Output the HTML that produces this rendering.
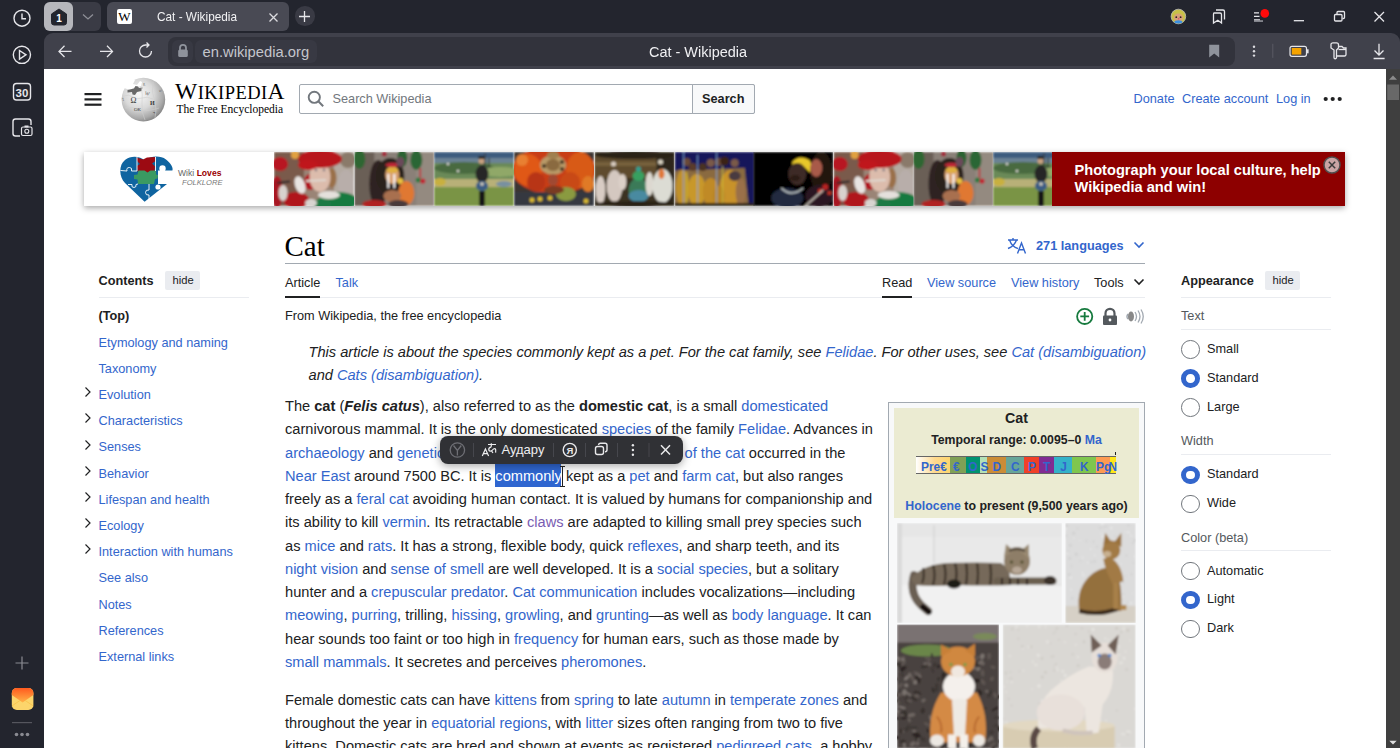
<!DOCTYPE html>
<html><head><meta charset="utf-8">
<style>
*{margin:0;padding:0;box-sizing:border-box}
html,body{width:1400px;height:748px;overflow:hidden;background:#23252e;font-family:"Liberation Sans",sans-serif;color:#202122}
.a{position:absolute}
#side{left:0;top:0;width:44px;height:748px;background:#23252e}
#tabbar{left:44px;top:0;width:1356px;height:33px;background:#23252e}
#toolbar{left:44px;top:33px;width:1356px;height:36px;background:#40414b;border-top-left-radius:9px}
#page{left:44px;top:69px;width:1342px;height:679px;background:#fff}
#sb{left:1386px;top:69px;width:14px;height:679px;background:#3f3f3f}
a,.l{color:#3366cc;text-decoration:none}
.v{color:#795cb2}
.ln{position:absolute;white-space:nowrap;font-size:14.62px;line-height:23.27px;left:285px}
.t13{font-size:12.73px}
.toc{position:absolute;left:98.5px;font-size:12.73px;white-space:nowrap;line-height:16px}
.chev{position:absolute;left:84px;width:8px;height:8px}
.rad{position:absolute;left:1181px;width:18.5px;height:18.5px;border-radius:50%;border:1.3px solid #72777d;background:#fff}
.rad.on{border:5.5px solid #3366cc}
.rl{position:absolute;left:1207px;font-size:12.73px;white-space:nowrap;line-height:16px}
.ph{position:absolute;top:152px;height:54px;width:80px;overflow:hidden}
</style></head><body>
<div id="side" class="a"></div>
<div id="tabbar" class="a"></div>
<div id="toolbar" class="a"></div>
<div id="page" class="a"></div>
<div id="sb" class="a"></div>

<!-- ===== sidebar icons ===== -->
<svg class="a" style="left:0;top:0" width="44" height="748" viewBox="0 0 44 748">
<g stroke="#e6e6ea" stroke-width="1.4" fill="none">
<circle cx="22" cy="18.2" r="8"/><path d="M22 13.5 V18.8 H26"/>
<circle cx="21.9" cy="54.8" r="8.6"/><path d="M19.5 50.5 L26 54.8 L19.5 59.1 Z"/>
<rect x="13.5" y="83.5" width="17" height="16.5" rx="3"/>
<path d="M20 136 H15.5 A2.5 2.5 0 0 1 13 133.5 V121.5 A2.5 2.5 0 0 1 15.5 119 H28.5 A2.5 2.5 0 0 1 31 121.5 V125"/>
</g>
<text x="22" y="96.5" text-anchor="middle" font-family="Liberation Sans" font-size="11.5" font-weight="bold" fill="#e6e6ea">30</text>
<rect x="21.5" y="127" width="10.5" height="8.5" rx="1.5" fill="none" stroke="#e6e6ea" stroke-width="1.2"/><rect x="24.5" y="125.5" width="4" height="2" fill="#e6e6ea"/><circle cx="26.8" cy="131.3" r="2" fill="none" stroke="#e6e6ea" stroke-width="1.1"/>
<path d="M22 656.5 V669.5 M15.5 663 H28.5" stroke="#8a8b92" stroke-width="1.2"/>
<defs><linearGradient id="mailg" x1="0" y1="0" x2="0" y2="1"><stop offset="0" stop-color="#ff5a1f"/><stop offset="1" stop-color="#ffb347"/></linearGradient></defs>
<rect x="11.8" y="688" width="21.6" height="22" rx="5" fill="#fcd56b"/>
<path d="M11.8 693 A5 5 0 0 1 16.8 688 H28.4 A5 5 0 0 1 33.4 693 V695 L22.6 702.5 L11.8 695 Z" fill="url(#mailg)"/>
<path d="M11.8 706 L20 700.5 M33.4 706 L25.2 700.5" stroke="#f7c24a" stroke-width="0.8"/>
<rect x="12" y="722" width="20" height="1.2" fill="#55565e"/>
<circle cx="16.5" cy="734.5" r="1.8" fill="#8a8b92"/><circle cx="22" cy="734.5" r="1.8" fill="#8a8b92"/><circle cx="27.5" cy="734.5" r="1.8" fill="#8a8b92"/>
</svg>

<!-- ===== tab strip ===== -->
<div class="a" style="left:44px;top:2px;width:57px;height:28.5px;background:#3a3b45;border-radius:6px"></div>
<div class="a" style="left:44px;top:2px;width:29px;height:28.5px;background:#b6b7bc;border-radius:6px"></div>
<svg class="a" style="left:50px;top:8px" width="18" height="18" viewBox="0 0 18 18"><path d="M1.5 6 L9 1 L16.5 6 V14.5 A2.5 2.5 0 0 1 14 17 H4 A2.5 2.5 0 0 1 1.5 14.5 Z" fill="#23252e" stroke="#23252e" stroke-width="1" stroke-linejoin="round"/><text x="9" y="14" text-anchor="middle" font-family="Liberation Sans" font-size="10" font-weight="bold" fill="#fff">1</text></svg>
<svg class="a" style="left:81px;top:13px" width="14" height="8" viewBox="0 0 14 8"><path d="M2 1.5 L7 6 L12 1.5" stroke="#8e8f97" stroke-width="1.3" fill="none"/></svg>
<div class="a" style="left:107px;top:2px;width:182px;height:28.5px;background:#494a54;border-radius:6px"></div>
<div class="a" style="left:117px;top:9px;width:15px;height:15px;background:#fff;border-radius:2px"></div>
<div class="a" style="left:117px;top:8.5px;width:15px;text-align:center;font-family:'Liberation Serif',serif;font-size:13px;line-height:16px;color:#000">W</div>
<div class="a" style="left:157px;top:8.5px;font-size:13.2px;line-height:16px;color:#f2f2f4;white-space:nowrap;transform:scaleX(0.895);transform-origin:0 0">Cat - Wikipedia</div>
<svg class="a" style="left:268px;top:12px" width="11" height="11" viewBox="0 0 11 11"><path d="M1.5 1.5 L9.5 9.5 M9.5 1.5 L1.5 9.5" stroke="#dcdce0" stroke-width="1.3"/></svg>
<div class="a" style="left:295px;top:6.3px;width:19.5px;height:19.5px;background:#393a44;border-radius:50%"></div>
<svg class="a" style="left:298px;top:9.5px" width="13" height="13" viewBox="0 0 13 13"><path d="M6.5 1 V12 M1 6.5 H12" stroke="#e6e6ea" stroke-width="1.3"/></svg>

<svg class="a" style="left:1160px;top:0" width="240" height="33" viewBox="1160 0 240 33">
<circle cx="1178.4" cy="16.5" r="7.3" fill="#c8c048" stroke="#bdbdbd" stroke-width="0.8"/><ellipse cx="1178.4" cy="17.8" rx="4.6" ry="4.2" fill="#d8a078"/><circle cx="1176.3" cy="17.2" r="0.9" fill="#2a2020"/><circle cx="1180.6" cy="17.2" r="0.9" fill="#2a2020"/><circle cx="1178.6" cy="18.8" r="0.8" fill="#e04878"/><ellipse cx="1178.4" cy="21.8" rx="4" ry="1.6" fill="#3a90e0"/>
<g stroke="#e6e6ea" stroke-width="1.3" fill="none">
<path d="M1214 13 H1220 A1.5 1.5 0 0 1 1221.5 14.5 V23 L1217.8 20.3 L1213.5 23 V14.5 Q1213.5 13 1214 13Z"/><path d="M1216 10 H1223 A1.5 1.5 0 0 1 1224.5 11.5 V19.5"/>
<path d="M1254 12.8 H1259 M1254 16.3 H1259.5 M1254 19.8 H1260"/>
<path d="M1293.8 20.7 H1304"/>
<rect x="1334.5" y="14.5" width="7.5" height="6.5" rx="1"/><path d="M1337 14 V12.5 A1 1 0 0 1 1338 11.5 H1343.5 A1 1 0 0 1 1344.5 12.5 V17.5 A1 1 0 0 1 1343.5 18.5 H1342.5"/>
<path d="M1374.5 12 L1384 21.5 M1384 12 L1374.5 21.5"/>
</g>
<rect x="1254" y="20.3" width="9" height="1.5" fill="#9a9ba2"/>
<circle cx="1264.8" cy="13.4" r="4.3" fill="#ff0a0a"/>
</svg>

<!-- ===== toolbar ===== -->
<div class="a" style="left:1390px;top:33px;width:10px;height:10px;background:#23252e"></div>
<div class="a" style="left:1380px;top:33px;width:20px;height:36px;background:#40414b;border-top-right-radius:9px"></div>
<svg class="a" style="left:44px;top:33px" width="140" height="36" viewBox="44 33 140 36">
<g stroke="#e6e6ea" stroke-width="1.3" fill="none">
<path d="M59 51.4 H71.5 M64.5 45.8 L59 51.4 L64.5 57"/>
<path d="M100 51.4 H112.5 M107 45.8 L112.5 51.4 L107 57"/>
<path d="M151.5 51 A6 6 0 1 1 145.5 45 H148.5 M146.5 42.5 L149 45 L146.5 47.5"/>
</g>
</svg>
<div class="a" style="left:168px;top:36.6px;width:1067px;height:29px;background:#32333c;border-radius:8px"></div>
<div class="a" style="left:172px;top:39.5px;width:21px;height:23px;background:#383943;border-radius:6px"></div>
<svg class="a" style="left:176px;top:43px" width="14" height="15" viewBox="0 0 14 15"><path d="M4 7 V4.8 A3 3 0 0 1 10 4.8 V7" stroke="#8f939c" stroke-width="1.8" fill="none"/><rect x="2.2" y="6.5" width="9.6" height="7.5" rx="1.6" fill="#8f939c"/></svg>
<div class="a" style="left:195px;top:39.5px;width:122px;height:23px;background:#383943;border-radius:6px"></div>
<div class="a" style="left:202.5px;top:43.8px;font-size:14.75px;line-height:17px;color:#c4c5cc;white-space:nowrap">en.wikipedia.org</div>
<div class="a" style="left:648.5px;top:43px;font-size:15.3px;line-height:17px;color:#f0f0f3;white-space:nowrap;transform:scaleX(0.945);transform-origin:0 0">Cat - Wikipedia</div>
<svg class="a" style="left:1200px;top:33px" width="200" height="36" viewBox="1200 33 200 36">
<path d="M1209.2 44.8 H1219.2 V57.5 L1214.2 53.5 L1209.2 57.5 Z" fill="#8f939c"/>
<circle cx="1254" cy="46.8" r="1.2" fill="#dcdce0"/><circle cx="1254" cy="51.2" r="1.2" fill="#dcdce0"/><circle cx="1254" cy="55.6" r="1.2" fill="#dcdce0"/>
<rect x="1272.3" y="43.8" width="1" height="14" fill="#5a5b64"/>
<rect x="1290" y="46.3" width="16.5" height="10" rx="2" fill="none" stroke="#e6e6ea" stroke-width="1.2"/><rect x="1291.8" y="48" width="9.5" height="6.6" fill="#f5a300"/><rect x="1306.8" y="49.3" width="1.8" height="4" fill="#e6e6ea"/>
<g stroke="#e6e6ea" stroke-width="1.3" fill="none">
<path d="M1331 44 A2 2 0 0 1 1333 42.8 H1336.5 A2 2 0 0 1 1338.5 44.8 V48 L1336.5 50 V57.5 A1.2 1.2 0 0 1 1334 57.5 V50 L1331 48 Z"/><path d="M1338.5 46.5 H1342 L1343.5 48 H1346 V54.5 A1.5 1.5 0 0 1 1344.5 56 H1336.5"/><path d="M1338.5 49.5 H1346"/>
<path d="M1379 43.8 V55 M1374.5 50.5 L1379 55 L1383.5 50.5 M1373.6 58.5 H1384.6"/>
</g>
</svg>
<!-- scrollbar -->
<svg class="a" style="left:1386px;top:69px" width="14" height="679" viewBox="0 0 14 679"><path d="M3 10.8 L7 6.6 L11 10.8 Z" fill="#8c8c8c"/><rect x="1.2" y="15.5" width="11.8" height="15.5" fill="#686868"/><path d="M3.3 671.8 L7 675.6 L10.7 671.8 Z" fill="#e0e0e0"/></svg>


<!-- ===== Wikipedia header ===== -->
<svg class="a" style="left:84px;top:92px" width="18" height="15" viewBox="0 0 18 15"><rect x="0.5" y="1" width="17" height="2.2" fill="#202122"/><rect x="0.5" y="6.3" width="17" height="2.2" fill="#202122"/><rect x="0.5" y="11.6" width="17" height="2.2" fill="#202122"/></svg>

<svg class="a" style="left:115px;top:74px" width="60" height="50" viewBox="0 0 60 50">
<defs><radialGradient id="gl" cx="0.4" cy="0.38" r="0.68"><stop offset="0" stop-color="#f8f8f8"/><stop offset="0.5" stop-color="#d8d8d8"/><stop offset="0.82" stop-color="#a8a8a8"/><stop offset="1" stop-color="#7a7a7a"/></radialGradient></defs>
<circle cx="28.4" cy="25.6" r="21.8" fill="url(#gl)"/>
<path d="M9 14 Q12 8 17 5 L20 6 L18 10 L22 11 L25 7 L27 8 L26 12 L20 13 L15 16 Z" fill="#fff"/>
<path d="M12.5 16 L19 14.5 L20.5 12 L23 12.5 L24 14 L27.5 13.5 L26.5 17 L22 18 L20 21 L17.5 20.5 L17 18 L12.5 18.5 Z" fill="#686868"/>
<g stroke="#cfcfcf" stroke-width="0.6" fill="none"><path d="M8 22 Q14 20 18 23 Q22 26 27 24 Q32 22 38 25 M26 12 Q28 20 27 30 Q26 38 30 46 M38 8 Q36 18 40 28 Q42 36 40 44 M10 34 Q18 32 24 36 Q32 38 44 34"/></g>
<text x="15.5" y="28.8" font-family="Liberation Serif" font-size="8" fill="#3a3a3a">Ω</text>
<text x="30" y="21" font-family="Liberation Serif" font-size="5" fill="#555" transform="rotate(15 32 19)">W</text>
<text x="35" y="31" font-family="Liberation Serif" font-size="6" font-weight="bold" fill="#333">И</text>
<text x="19" y="37" font-family="Liberation Serif" font-size="5" fill="#444">ОК</text>
<text x="38" y="40" font-family="Liberation Serif" font-size="4.5" font-weight="bold" fill="#444">ר</text>
<text x="7" y="27" font-family="Liberation Serif" font-size="4" fill="#666">ไ</text>
<text x="44" y="18" font-family="Liberation Serif" font-size="4" fill="#666">ש</text>
<text x="28" y="11" font-family="Liberation Serif" font-size="3.5" fill="#666">ع</text>
</svg>
<div class="a" style="left:175px;top:80px;font-family:'Liberation Serif',serif;font-size:23.5px;line-height:23px;letter-spacing:0.45px;color:#000;white-space:nowrap">W<span style="font-size:18.5px">IKIPEDI</span>A</div>
<div class="a" style="left:176.5px;top:101.5px;font-family:'Liberation Serif',serif;font-size:11.5px;line-height:14px;color:#000;white-space:nowrap">The Free Encyclopedia</div>

<div class="a" style="left:299px;top:84px;width:456px;height:29.5px;border:1px solid #a2a9b1;border-radius:2px;background:#fff"></div>
<div class="a" style="left:691.5px;top:84px;width:63.5px;height:29.5px;border:1px solid #a2a9b1;border-radius:0 2px 2px 0;background:#f8f9fa"></div>
<svg class="a" style="left:307px;top:90px" width="18" height="18" viewBox="0 0 18 18"><circle cx="7.3" cy="7.3" r="5.6" stroke="#72777d" stroke-width="1.9" fill="none"/><path d="M11.3 11.3 L16.2 16.2" stroke="#72777d" stroke-width="2" /></svg>
<div class="a" style="left:332.5px;top:91px;font-size:12.73px;line-height:16px;color:#72777d;white-space:nowrap">Search Wikipedia</div>
<div class="a" style="left:702px;top:91px;font-size:12.73px;line-height:16px;font-weight:bold;color:#202122;white-space:nowrap">Search</div>

<div class="a" style="left:1133.5px;top:91px;font-size:12.73px;line-height:16px;white-space:nowrap"><a>Donate</a></div>
<div class="a" style="left:1182px;top:91px;font-size:12.73px;line-height:16px;white-space:nowrap"><a>Create account</a></div>
<div class="a" style="left:1276px;top:91px;font-size:12.73px;line-height:16px;white-space:nowrap"><a>Log in</a></div>
<svg class="a" style="left:1323px;top:95px" width="20" height="8" viewBox="0 0 20 8"><circle cx="2.7" cy="4" r="2.1" fill="#202122"/><circle cx="9.7" cy="4" r="2.1" fill="#202122"/><circle cx="16.7" cy="4" r="2.1" fill="#202122"/></svg>

<!-- ===== Banner ===== -->
<div class="a" style="left:84px;top:152px;width:1261px;height:54px;background:#fff;box-shadow:0 2px 6px rgba(0,0,0,0.35)"></div>
<svg class="a" style="left:274px;top:152px" width="778" height="54" viewBox="0 0 778 54"><defs><filter id="bl" x="-10%" y="-10%" width="120%" height="120%"><feGaussianBlur stdDeviation="1.3"/></filter>
<clipPath id="c_flute"><rect width="80" height="54"/></clipPath><g id="p_flute"><g clip-path="url(#c_flute)"><g filter="url(#bl)"><rect width="80" height="54" fill="#9a8476"/>
<rect x="0" width="30" height="54" fill="#7a5a4c"/>
<rect x="60" width="20" height="54" fill="#b4aaa2"/>
<circle cx="21" cy="3" r="4" fill="#e0a040"/>
<ellipse cx="6" cy="12" rx="8" ry="7" fill="#b81822"/>
<ellipse cx="3" cy="40" rx="6" ry="16" fill="#a81820"/>
<ellipse cx="74" cy="8" rx="8" ry="8" fill="#8a7a6a"/>
<ellipse cx="72" cy="32" rx="8" ry="14" fill="#b8aeaa"/>
<ellipse cx="36" cy="30" rx="6" ry="8" fill="#b01820"/>
<ellipse cx="58" cy="26" rx="4.5" ry="10" fill="#9a7048"/>
<ellipse cx="46" cy="25" rx="10.5" ry="15" fill="#dcbcac"/>
<circle cx="42" cy="18" r="1.2" fill="#6a6a78"/><circle cx="50" cy="18" r="1.2" fill="#6a6a78"/>
<ellipse cx="46" cy="7" rx="22" ry="9" fill="#b8121e"/>
<ellipse cx="34" cy="13" rx="10" ry="5" fill="#c0141e"/>
<ellipse cx="22" cy="48" rx="13" ry="8" fill="#b0141c"/>
<path d="M3 31 L16 29.5" stroke="#2a2a2a" stroke-width="2.2"/>
<path d="M32 29 L52 28" stroke="#e0d8d0" stroke-width="1.8"/>
<ellipse cx="26" cy="33" rx="5" ry="9" fill="#e8e4e2" transform="rotate(-20 26 33)"/>
<ellipse cx="9" cy="41" rx="4.5" ry="8" fill="#d8d2ce"/>
<ellipse cx="64" cy="49" rx="20" ry="9" fill="#137a40"/>
<ellipse cx="48" cy="52" rx="10" ry="5" fill="#1a7a44"/>
<ellipse cx="55" cy="43" rx="11" ry="4" fill="#e4e0dc"/>
<ellipse cx="37" cy="51" rx="6" ry="4" fill="#d8d4d0"/></g></g></g>
<clipPath id="c_candles"><rect width="80" height="54"/></clipPath><g id="p_candles"><g clip-path="url(#c_candles)"><g filter="url(#bl)"><rect width="80" height="54" fill="#8a8078"/>
<rect width="20" height="54" fill="#6a5e56"/>
<rect x="62" width="18" height="54" fill="#948a80"/>
<ellipse cx="5" cy="7" rx="6" ry="10" fill="#2e6630"/>
<ellipse cx="48" cy="6" rx="5" ry="9" fill="#2a6230"/>
<ellipse cx="62" cy="8" rx="6" ry="10" fill="#2c6634"/>
<circle cx="30" cy="2" r="2.5" fill="#a02838"/>
<path d="M66 16 V26" stroke="#c02030" stroke-width="1.5"/>
<circle cx="64" cy="28" r="2.6" fill="#2a7a40"/><circle cx="68.5" cy="29" r="2.6" fill="#c02030"/>
<ellipse cx="24" cy="32" rx="9" ry="24" fill="#2e2420"/>
<ellipse cx="36" cy="24" rx="14" ry="18" fill="#2a201c"/>
<ellipse cx="38" cy="23" rx="7" ry="9" fill="#d8a070"/>
<ellipse cx="38" cy="18" rx="6" ry="3" fill="#e0b040"/>
<ellipse cx="38" cy="13" rx="7" ry="2.2" fill="#c02838"/>
<ellipse cx="46" cy="10" rx="4" ry="5" fill="#6a4a5a"/>
<ellipse cx="46" cy="29" rx="3" ry="3" fill="#e8c040"/>
<ellipse cx="52" cy="41" rx="8" ry="12" fill="#e07830"/>
<ellipse cx="20" cy="52" rx="12" ry="4" fill="#b02020"/>
<ellipse cx="38" cy="44" rx="9" ry="6" fill="#a87050"/>
<ellipse cx="44" cy="52" rx="10" ry="4" fill="#4a3a3a"/>
<path d="M34 22 V36 M40 22 V36" stroke="#fff" stroke-width="1.8"/></g></g></g>
<clipPath id="c_piper"><rect width="80" height="54"/></clipPath><g id="p_piper"><g clip-path="url(#c_piper)"><g filter="url(#bl)"><rect width="80" height="54" fill="#7a9050"/>
<rect width="80" height="8" fill="#3e5c7e"/>
<rect y="6" width="80" height="6" fill="#6a8294"/>
<rect y="11" width="80" height="16" fill="#6a8a58"/>
<ellipse cx="30" cy="16" rx="30" ry="6" fill="#4a6a40"/>
<ellipse cx="66" cy="20" rx="20" ry="5" fill="#90a868"/>
<circle cx="14" cy="12" r="1.3" fill="#d8d8d0"/><circle cx="24" cy="19" r="1.3" fill="#d8d8d0"/>
<rect y="27" width="80" height="9" fill="#b8b078"/>
<rect y="35" width="80" height="19" fill="#7a9444"/>
<ellipse cx="6" cy="30" rx="6" ry="4" fill="#c8b040"/>
<ellipse cx="70" cy="32" rx="8" ry="3" fill="#7890a0"/>
<ellipse cx="48" cy="22" rx="6.5" ry="9" fill="#262626"/>
<circle cx="47.5" cy="9" r="3" fill="#c8a080"/>
<rect x="44.5" y="4" width="6" height="3" fill="#222"/>
<path d="M51 1 V14 M55 6 V16" stroke="#333" stroke-width="1"/>
<ellipse cx="48" cy="34" rx="6" ry="5" fill="#3a5c84"/>
<circle cx="48" cy="32" r="1.8" fill="#d8d0c0"/>
<rect x="45" y="39" width="6" height="15" fill="#141414"/></g></g></g>
<clipPath id="c_feather"><rect width="80" height="54"/></clipPath><g id="p_feather"><g clip-path="url(#c_feather)"><g filter="url(#bl)"><rect width="80" height="54" fill="#3a3430"/>
<ellipse cx="40" cy="18" rx="42" ry="24" fill="#c83c14"/>
<ellipse cx="14" cy="18" rx="14" ry="16" fill="#e05818"/>
<ellipse cx="66" cy="18" rx="14" ry="18" fill="#d85a18"/>
<ellipse cx="56" cy="30" rx="10" ry="10" fill="#c84818"/>
<ellipse cx="22" cy="30" rx="9" ry="10" fill="#b83414"/>
<ellipse cx="8" cy="8" rx="6" ry="6" fill="#e88030"/>
<ellipse cx="74" cy="32" rx="6" ry="8" fill="#e07a28"/>
<ellipse cx="39" cy="13" rx="13" ry="10" fill="#b89a68"/>
<ellipse cx="39" cy="13" rx="7" ry="6" fill="#8a6a40"/>
<circle cx="30" cy="14" r="2" fill="#3a2a1a"/><circle cx="48" cy="10" r="2" fill="#3a2a1a"/><circle cx="48" cy="17" r="2" fill="#3a2a1a"/>
<ellipse cx="39" cy="3" rx="6" ry="4" fill="#a08050"/>
<ellipse cx="39" cy="28" rx="5" ry="6" fill="#a04830"/>
<rect x="0" y="40" width="80" height="14" fill="#343840"/>
<ellipse cx="52" cy="42" rx="10" ry="7" fill="#8a9a40"/>
<ellipse cx="40" cy="38" rx="10" ry="4" fill="#7a3a20"/>
<circle cx="18" cy="48" r="2.5" fill="#d8b830"/><circle cx="26" cy="47" r="2.5" fill="#d8b830"/><circle cx="36" cy="46" r="2.5" fill="#d8b830"/><circle cx="72" cy="49" r="2.5" fill="#d8b830"/>
</g></g></g><clipPath id="c_dancers"><rect width="80" height="54"/></clipPath><g id="p_dancers"><g clip-path="url(#c_dancers)"><g filter="url(#bl)"><rect width="80" height="54" fill="#3a3020"/>
<rect y="4" width="80" height="22" fill="#5e4c2e"/>
<rect y="10" width="80" height="4" fill="#76603a"/>
<rect x="62" width="18" height="54" fill="#2e281a"/>
<ellipse cx="40" cy="3" rx="40" ry="4" fill="#2a2418"/>
<ellipse cx="6" cy="38" rx="5" ry="14" fill="#d8ccc4"/>
<ellipse cx="20" cy="34" rx="8" ry="16" fill="#d4c8c0"/>
<circle cx="19" cy="12" r="2.5" fill="#d8ccc0"/>
<ellipse cx="28" cy="30" rx="4" ry="8" fill="#dcd0c8"/>
<ellipse cx="44" cy="38" rx="10" ry="12" fill="#3a7a58"/>
<ellipse cx="44" cy="44" rx="10" ry="6" fill="#4a8aa0"/>
<ellipse cx="44" cy="24" rx="6" ry="5" fill="#38a060"/>
<circle cx="44" cy="17" r="2.5" fill="#30a090"/>
<ellipse cx="55" cy="32" rx="4" ry="12" fill="#dcd8d0"/>
<ellipse cx="68" cy="34" rx="10" ry="17" fill="#dcdcd4"/>
<circle cx="66" cy="10" r="2.5" fill="#d8d0c0"/>
<ellipse cx="67" cy="22" rx="3" ry="5" fill="#e07838"/>
<ellipse cx="40" cy="52" rx="40" ry="3" fill="#2a2418"/></g></g></g>
<clipPath id="c_monks"><rect width="80" height="54"/></clipPath><g id="p_monks"><g clip-path="url(#c_monks)"><g filter="url(#bl)"><rect width="80" height="54" fill="#14145a"/>
<path d="M0 20 Q4 16 10 18 L70 16 L74 54 L0 54 Z" fill="#8a6a40"/>
<ellipse cx="8" cy="36" rx="7" ry="18" fill="#c0902a"/>
<ellipse cx="22" cy="38" rx="9" ry="16" fill="#c8982c"/>
<ellipse cx="36" cy="40" rx="8" ry="14" fill="#c08a26"/>
<ellipse cx="56" cy="36" rx="11" ry="18" fill="#c8922a"/>
<ellipse cx="44" cy="44" rx="6" ry="10" fill="#b88628"/>
<ellipse cx="66" cy="40" rx="5" ry="14" fill="#9a7048"/>
<circle cx="12" cy="10" r="4" fill="#6a4a38"/><circle cx="18" cy="15" r="4" fill="#5a3a2a"/><circle cx="28" cy="15" r="4" fill="#4a3024"/><circle cx="36" cy="11" r="4" fill="#7a5a48"/><circle cx="44" cy="10" r="4" fill="#6a4a38"/><circle cx="50" cy="9" r="4.5" fill="#3a2418"/><circle cx="60" cy="11" r="4" fill="#7a5a48"/>
<ellipse cx="60" cy="24" rx="6" ry="5" fill="#4a3a40"/>
<path d="M9 0 V54 M23 3 V54 M42 1 V54" stroke="#80a8d8" stroke-width="0.9"/>
<path d="M12 20 V54 M48 14 V54" stroke="#c8c040" stroke-width="0.9"/>
<rect width="80" height="3" y="51" fill="#2a2018"/></g></g></g><clipPath id="c_yellow"><rect width="80" height="54"/></clipPath><g id="p_yellow"><g clip-path="url(#c_yellow)"><g filter="url(#bl)"><rect width="80" height="54" fill="#050505"/>
<path d="M39 10 Q46 2 56 8 Q60 14 58 22 L50 14 Q44 12 39 16 Z" fill="#e8c82a"/>
<ellipse cx="44" cy="22" rx="9" ry="11" fill="#3e2c26"/>
<ellipse cx="42" cy="26" rx="5" ry="3" fill="#2a1a14"/>
<ellipse cx="68" cy="20" rx="11" ry="20" fill="#201410"/>
<ellipse cx="63" cy="16" rx="6" ry="9" fill="#a85a4a"/>
<ellipse cx="34" cy="46" rx="16" ry="10" fill="#242a40"/>
<path d="M28 36 Q38 46 50 36" stroke="#c8d0d0" stroke-width="1.4" fill="none"/>
<ellipse cx="66" cy="44" rx="14" ry="11" fill="#2a1820"/>
<circle cx="72" cy="35" r="3" fill="#b82020"/><circle cx="67" cy="39" r="2.5" fill="#c83020"/><circle cx="76" cy="41" r="2" fill="#c83020"/>
<path d="M52 54 L70 38" stroke="#b8b0a8" stroke-width="1.8"/></g></g></g></defs>
<svg x="0" y="0" width="80" height="54" viewBox="0 0 80 54"><use href="#p_flute"/></svg>
<svg x="80.3" y="0" width="80" height="54" viewBox="0 0 80 54"><use href="#p_candles"/></svg>
<svg x="160" y="0" width="80" height="54" viewBox="0 0 80 54"><use href="#p_piper"/></svg>
<svg x="240" y="0" width="80" height="54" viewBox="0 0 80 54"><use href="#p_feather"/></svg>
<svg x="320.5" y="0" width="80" height="54" viewBox="0 0 80 54"><use href="#p_dancers"/></svg>
<svg x="400.7" y="0" width="80" height="54" viewBox="0 0 80 54"><use href="#p_monks"/></svg>
<svg x="479.3" y="0" width="80" height="54" viewBox="0 0 80 54"><use href="#p_yellow"/></svg>
<svg x="559.7" y="0" width="80" height="54" viewBox="0 0 80 54"><use href="#p_flute"/></svg>
<svg x="639.5" y="0" width="80" height="54" viewBox="0 0 80 54"><use href="#p_candles"/></svg>
<svg x="719" y="0" width="59" height="54" viewBox="0 0 59 54"><use href="#p_piper"/></svg>
</svg>
<svg class="a" style="left:115px;top:152px" width="65" height="54" viewBox="0 0 65 54">
<path d="M29.6 49.8 L10 31 C4 25 3.5 13 10 8 C16 3 25 4 30 8.5 C35 4 45 3 51 7.5 C56 11.5 58.5 16 57.4 18.5 L43 18.5 L43 32 L52 32 Z" fill="#0f64a0"/>
<path d="M21.5 5.5 L28 7.5 L32 5.5 L40.3 5 L40.5 9 L37 11.5 L40 14.5 L39.5 19.5 L34.5 19.5 L32.5 21.5 L30 19.5 L22.5 19.5 L22 14 L25 12 L22 9 Z" fill="#9c0a12"/>
<path d="M23.5 18.5 L29.5 18.5 L32.5 20.5 L35.5 18.5 L41 18.5 L41 22.5 L43 23 L42.5 26.5 L40 27 L39 32 L23 32 L22.5 27.5 L19 27 L19 23 L22.5 22.5 Z" fill="#3a9a62"/>
<g stroke="#fff" stroke-width="0.9" fill="none">
<path d="M5.5 18.5 L12 19 Q11 15.5 14.5 15.5 Q17.5 15.5 16.5 19 L22 19"/>
<path d="M13 32.5 L17 32.5 Q16 35.5 19 35.5 Q21.5 35.5 21 32.5 L23 32"/>
<path d="M34 32 L34 38 Q30.5 37.5 30.5 40.5 Q30.5 43.5 34 43 L34 47"/>
<path d="M22 5 L22 19 M40.5 5 L40.5 19"/>
</g>
<circle cx="47.5" cy="16.5" r="3.2" fill="#fff"/>
<circle cx="43" cy="35" r="2.6" fill="#fff"/>
</svg>
<div class="a" style="left:178px;top:168px;font-size:8.6px;line-height:10px;white-space:nowrap;color:#666"><span>Wiki </span><b style="color:#990000">Loves</b></div>
<div class="a" style="left:182px;top:178px;font-size:7.6px;line-height:10px;white-space:nowrap;color:#777;font-style:italic">FOLKLORE</div>
<div class="a" style="left:1052px;top:152px;width:293px;height:54px;background:#8d0000"></div>
<div class="a" style="left:1074.5px;top:162px;font-size:14.64px;line-height:16.5px;font-weight:bold;color:#fff;white-space:nowrap">Photograph your local culture, help<br>Wikipedia and win!</div>
<svg class="a" style="left:1322px;top:155px" width="20" height="20" viewBox="0 0 20 20"><circle cx="10" cy="10" r="8" fill="#c9a4a4" stroke="#505050" stroke-width="1.5"/><path d="M6.8 6.8 L13.2 13.2 M13.2 6.8 L6.8 13.2" stroke="#3a3a3a" stroke-width="1.5"/></svg>

<!-- ===== Title ===== -->
<div class="a" style="left:284.5px;top:231px;font-family:'Liberation Serif',serif;font-size:29px;line-height:30px;color:#000;white-space:nowrap">Cat</div>
<div class="a" style="left:285px;top:263px;width:860px;height:1px;background:#a2a9b1"></div>
<svg class="a" style="left:1007px;top:237px" width="20" height="17" viewBox="0 0 20 17"><g stroke="#3366cc" stroke-width="1.4" fill="none"><path d="M1 3 H11 M6 1 V3 M2.5 3 Q5 10 11 11.5 M9.5 3 Q7.5 9 1 11.5"/><path d="M10.5 16.5 L14.5 6 L18.5 16.5 M12 12.8 H17"/></g></svg>
<div class="a" style="left:1036px;top:237.5px;font-size:12.73px;line-height:16px;font-weight:bold;color:#3366cc;white-space:nowrap">271 languages</div>
<svg class="a" style="left:1133px;top:241px" width="12" height="8" viewBox="0 0 12 8"><path d="M1.5 1.5 L6 6 L10.5 1.5" stroke="#3366cc" stroke-width="1.6" fill="none"/></svg>

<div class="a" style="left:285px;top:296.5px;width:860px;height:1px;background:#eaecf0"></div>
<div class="a" style="left:285px;top:296px;width:35px;height:2px;background:#202122"></div>
<div class="a" style="left:882px;top:296px;width:30px;height:2px;background:#202122"></div>
<div class="a" style="left:285px;top:275px;font-size:12.73px;line-height:16px;white-space:nowrap">Article</div>
<div class="a" style="left:335.5px;top:275px;font-size:12.73px;line-height:16px;white-space:nowrap"><a>Talk</a></div>
<div class="a" style="left:882px;top:275px;font-size:12.73px;line-height:16px;white-space:nowrap">Read</div>
<div class="a" style="left:927px;top:275px;font-size:12.73px;line-height:16px;white-space:nowrap"><a>View source</a></div>
<div class="a" style="left:1011px;top:275px;font-size:12.73px;line-height:16px;white-space:nowrap"><a>View history</a></div>
<div class="a" style="left:1094px;top:275px;font-size:12.73px;line-height:16px;white-space:nowrap">Tools</div>
<svg class="a" style="left:1133px;top:278px" width="12" height="8" viewBox="0 0 12 8"><path d="M1.5 1.5 L6 6 L10.5 1.5" stroke="#202122" stroke-width="1.6" fill="none"/></svg>

<div class="a" style="left:285px;top:308px;font-size:12.73px;line-height:16px;white-space:nowrap">From Wikipedia, the free encyclopedia</div>
<svg class="a" style="left:1076px;top:307px" width="70" height="19" viewBox="0 0 70 19">
<circle cx="8.7" cy="9.4" r="7.6" fill="none" stroke="#167a3e" stroke-width="1.8"/><path d="M8.7 5 V13.8 M4.3 9.4 H13.1" stroke="#167a3e" stroke-width="1.8"/>
<rect x="27" y="8.5" width="14" height="9.5" rx="1" fill="#54595d"/><path d="M29.5 9 V6.3 A4.5 4.5 0 0 1 38.5 6.3 V9" stroke="#54595d" stroke-width="2.2" fill="none"/><circle cx="34" cy="13" r="1.4" fill="#fff"/>
<path d="M52 7 Q50 9.5 52 12" stroke="#a2a9b1" stroke-width="1.5" fill="none"/><ellipse cx="55" cy="9.5" rx="3" ry="5" fill="#888"/><path d="M59 5 Q62 9.5 59 14 M62 3.5 Q66 9.5 62 15.5 M65 2.5 Q69.5 9.5 65 16.5" stroke="#a2a9b1" stroke-width="1.3" fill="none"/>
</svg>

<!-- hatnote -->
<div class="ln" style="left:308.5px;top:341px;font-style:italic">This article is about the species commonly kept as a pet. For the cat family, see <a>Felidae</a>. For other uses, see <a>Cat (disambiguation)</a></div>
<div class="ln" style="left:308.5px;top:364.3px;font-style:italic">and <a>Cats (disambiguation)</a>.</div>

<!-- para -->
<div class="a" style="left:494.6px;top:464.2px;width:66.5px;height:23.3px;background:#2f66d0"></div>

<div class="ln" style="top:395.00px">The <b>cat</b> (<b><i>Felis catus</i></b>), also referred to as the <b>domestic cat</b>, is a small <a>domesticated</a></div>
<div class="ln" style="top:418.27px">carnivorous mammal. It is the only domesticated <a>species</a> of the family <a>Felidae</a>. Advances in</div>
<div class="ln" style="top:441.54px"><a>archaeology</a> and <a>genetics</a> have shown that the <a>domestication of the cat</a> occurred in the</div>
<div class="ln" style="top:464.81px"><a>Near East</a> around 7500 BC. It is <span style="color:#fff">commonly</span> kept as a <a>pet</a> and <a>farm cat</a>, but also ranges</div>
<div class="ln" style="top:488.08px">freely as a <a>feral cat</a> avoiding human contact. It is valued by humans for companionship and</div>
<div class="ln" style="top:511.35px">its ability to kill <a>vermin</a>. Its retractable <a class="v">claws</a> are adapted to killing small prey species such</div>
<div class="ln" style="top:534.62px">as <a>mice</a> and <a>rats</a>. It has a strong, flexible body, quick <a>reflexes</a>, and sharp teeth, and its</div>
<div class="ln" style="top:557.89px"><a>night vision</a> and <a>sense of smell</a> are well developed. It is a <a>social species</a>, but a solitary</div>
<div class="ln" style="top:581.16px">hunter and a <a>crepuscular predator</a>. <a>Cat communication</a> includes vocalizations—including</div>
<div class="ln" style="top:604.43px"><a>meowing</a>, <a>purring</a>, trilling, <a>hissing</a>, <a>growling</a>, and <a>grunting</a>—as well as <a>body language</a>. It can</div>
<div class="ln" style="top:627.70px">hear sounds too faint or too high in <a>frequency</a> for human ears, such as those made by</div>
<div class="ln" style="top:650.97px"><a>small mammals</a>. It secretes and perceives <a>pheromones</a>.</div>
<div class="ln" style="top:688.79px">Female domestic cats can have <a>kittens</a> from <a>spring</a> to late <a>autumn</a> in <a>temperate zones</a> and</div>
<div class="ln" style="top:712.06px">throughout the year in <a>equatorial regions</a>, with <a>litter</a> sizes often ranging from two to five</div>
<div class="ln" style="top:735.33px">kittens. Domestic cats are bred and shown at events as registered <a>pedigreed cats</a>, a hobby</div>

<!-- ===== TOC ===== -->
<div class="toc" style="top:272.5px;font-weight:bold">Contents</div>
<div class="a" style="left:165px;top:270.5px;width:35px;height:19.5px;background:#eaecf0;border-radius:2px"></div>
<div class="a" style="left:172.5px;top:273px;font-size:11.2px;line-height:14px;white-space:nowrap">hide</div>
<div class="a" style="left:98.5px;top:297px;width:150px;height:1px;background:#eaecf0"></div>
<div class="toc" style="top:307.5px;font-weight:bold">(Top)</div>
<div class="toc" style="top:334.59px"><a>Etymology and naming</a></div>
<div class="toc" style="top:360.79px"><a>Taxonomy</a></div>
<div class="toc" style="top:386.99px"><a>Evolution</a></div>
<svg class="a" style="left:82px;top:386.20px" width="12" height="12" viewBox="0 0 12 12"><path d="M3.5 1.5 L8 6 L3.5 10.5" stroke="#202122" stroke-width="1.2" fill="none"/></svg>
<div class="toc" style="top:413.19px"><a>Characteristics</a></div>
<svg class="a" style="left:82px;top:412.40px" width="12" height="12" viewBox="0 0 12 12"><path d="M3.5 1.5 L8 6 L3.5 10.5" stroke="#202122" stroke-width="1.2" fill="none"/></svg>
<div class="toc" style="top:439.39px"><a>Senses</a></div>
<svg class="a" style="left:82px;top:438.60px" width="12" height="12" viewBox="0 0 12 12"><path d="M3.5 1.5 L8 6 L3.5 10.5" stroke="#202122" stroke-width="1.2" fill="none"/></svg>
<div class="toc" style="top:465.59px"><a>Behavior</a></div>
<svg class="a" style="left:82px;top:464.80px" width="12" height="12" viewBox="0 0 12 12"><path d="M3.5 1.5 L8 6 L3.5 10.5" stroke="#202122" stroke-width="1.2" fill="none"/></svg>
<div class="toc" style="top:491.79px"><a>Lifespan and health</a></div>
<svg class="a" style="left:82px;top:491.00px" width="12" height="12" viewBox="0 0 12 12"><path d="M3.5 1.5 L8 6 L3.5 10.5" stroke="#202122" stroke-width="1.2" fill="none"/></svg>
<div class="toc" style="top:517.99px"><a>Ecology</a></div>
<svg class="a" style="left:82px;top:517.20px" width="12" height="12" viewBox="0 0 12 12"><path d="M3.5 1.5 L8 6 L3.5 10.5" stroke="#202122" stroke-width="1.2" fill="none"/></svg>
<div class="toc" style="top:544.19px"><a>Interaction with humans</a></div>
<svg class="a" style="left:82px;top:543.40px" width="12" height="12" viewBox="0 0 12 12"><path d="M3.5 1.5 L8 6 L3.5 10.5" stroke="#202122" stroke-width="1.2" fill="none"/></svg>
<div class="toc" style="top:570.39px"><a>See also</a></div>
<div class="toc" style="top:596.59px"><a>Notes</a></div>
<div class="toc" style="top:622.79px"><a>References</a></div>
<div class="toc" style="top:648.99px"><a>External links</a></div>

<!-- ===== Appearance ===== -->
<div class="a" style="left:1181px;top:273px;font-size:12.73px;line-height:16px;font-weight:bold;white-space:nowrap">Appearance</div>
<div class="a" style="left:1265px;top:270.5px;width:35px;height:19.5px;background:#eaecf0;border-radius:2px"></div>
<div class="a" style="left:1272.5px;top:273px;font-size:11.2px;line-height:14px;white-space:nowrap">hide</div>
<div class="a" style="left:1181px;top:297px;width:149.5px;height:1px;background:#eaecf0"></div>
<div class="a" style="left:1181px;top:307.5px;font-size:12.73px;line-height:16px;color:#54595d;white-space:nowrap">Text</div>
<div class="a" style="left:1181px;top:328.7px;width:149.5px;height:1px;background:#eaecf0"></div>
<div class="rad" style="top:340.15px"></div>
<div class="rl" style="top:341.09px">Small</div>
<div class="rad on" style="top:369.45px"></div>
<div class="rl" style="top:370.39px">Standard</div>
<div class="rad" style="top:398.35px"></div>
<div class="rl" style="top:399.29px">Large</div>
<div class="a" style="left:1181px;top:432.99px;font-size:12.73px;line-height:16px;color:#54595d;white-space:nowrap">Width</div>
<div class="a" style="left:1181px;top:453.7px;width:149.5px;height:1px;background:#eaecf0"></div>
<div class="rad on" style="top:465.55px"></div>
<div class="rl" style="top:466.49px">Standard</div>
<div class="rad" style="top:494.55px"></div>
<div class="rl" style="top:495.49px">Wide</div>
<div class="a" style="left:1181px;top:529.59px;font-size:12.73px;line-height:16px;color:#54595d;white-space:nowrap">Color (beta)</div>
<div class="a" style="left:1181px;top:549.8px;width:149.5px;height:1px;background:#eaecf0"></div>
<div class="rad" style="top:561.65px"></div>
<div class="rl" style="top:562.59px">Automatic</div>
<div class="rad on" style="top:590.55px"></div>
<div class="rl" style="top:591.49px">Light</div>
<div class="rad" style="top:619.55px"></div>
<div class="rl" style="top:620.49px">Dark</div>

<!-- ===== Infobox ===== -->
<div class="a" style="left:888px;top:402px;width:257px;height:360px;border:1px solid #a2a9b1;background:#f8f9fa"></div>
<div class="a" style="left:894px;top:407.5px;width:245px;height:110.5px;background:#ebebd2"></div>
<div class="a" style="left:894px;top:410px;width:245px;text-align:center;font-size:14.2px;line-height:17px;font-weight:bold">Cat</div>
<div class="a" style="left:894px;top:433px;width:245px;text-align:center;font-size:12.3px;line-height:15px;font-weight:bold;white-space:nowrap">Temporal range: 0.0095–0 <a>Ma</a></div>
<div class="a" style="left:916px;top:456px;width:34px;height:17.5px;background:linear-gradient(90deg,#fff,#fed98e 55%,#fdd56f)"></div>
<div class="a" style="left:950px;top:456px;width:16px;height:17.5px;background:#7fa056"></div>
<div class="a" style="left:966px;top:456px;width:14px;height:17.5px;background:#009270"></div>
<div class="a" style="left:980px;top:456px;width:7px;height:17.5px;background:#b3e1b6"></div>
<div class="a" style="left:987px;top:456px;width:19px;height:17.5px;background:#cb8c37"></div>
<div class="a" style="left:1006px;top:456px;width:18px;height:17.5px;background:#67a599"></div>
<div class="a" style="left:1024px;top:456px;width:15px;height:17.5px;background:#f04028"></div>
<div class="a" style="left:1039px;top:456px;width:15px;height:17.5px;background:#812b92"></div>
<div class="a" style="left:1054px;top:456px;width:18px;height:17.5px;background:#34b2c9"></div>
<div class="a" style="left:1072px;top:456px;width:24px;height:17.5px;background:#7fc64e"></div>
<div class="a" style="left:1096px;top:456px;width:14px;height:17.5px;background:#fd9a52"></div>
<div class="a" style="left:1110px;top:456px;width:6px;height:17.5px;background:#ffe619"></div>
<div class="a" style="left:916px;top:455.5px;width:200px;height:1.2px;background:#666"></div>
<div class="a" style="left:916px;top:472.5px;width:200px;height:1.2px;background:#666"></div>
<div class="a" style="left:921px;top:459.5px;font-size:11.9px;line-height:14px;font-weight:bold;color:#3366cc;white-space:nowrap">Pre€</div>
<div class="a" style="left:953px;top:459.5px;font-size:11.9px;line-height:14px;font-weight:bold;color:#3366cc;white-space:nowrap">€</div>
<div class="a" style="left:968.3px;top:459.5px;font-size:11.9px;line-height:14px;font-weight:bold;color:#3366cc;white-space:nowrap">O</div>
<div class="a" style="left:980.5px;top:459.5px;font-size:11.9px;line-height:14px;font-weight:bold;color:#3366cc;white-space:nowrap">S</div>
<div class="a" style="left:992.5px;top:459.5px;font-size:11.9px;line-height:14px;font-weight:bold;color:#3366cc;white-space:nowrap">D</div>
<div class="a" style="left:1011px;top:459.5px;font-size:11.9px;line-height:14px;font-weight:bold;color:#3366cc;white-space:nowrap">C</div>
<div class="a" style="left:1028px;top:459.5px;font-size:11.9px;line-height:14px;font-weight:bold;color:#3366cc;white-space:nowrap">P</div>
<div class="a" style="left:1043px;top:459.5px;font-size:11.9px;line-height:14px;font-weight:bold;color:#3366cc;white-space:nowrap">T</div>
<div class="a" style="left:1060.3px;top:459.5px;font-size:11.9px;line-height:14px;font-weight:bold;color:#3366cc;white-space:nowrap">J</div>
<div class="a" style="left:1080px;top:459.5px;font-size:11.9px;line-height:14px;font-weight:bold;color:#3366cc;white-space:nowrap">K</div>
<div class="a" style="left:1096px;top:459.5px;font-size:11.9px;line-height:14px;font-weight:bold;color:#3366cc;white-space:nowrap">Pg</div>
<div class="a" style="left:1108.5px;top:459.5px;font-size:11.9px;line-height:14px;font-weight:bold;color:#3366cc;white-space:nowrap">N</div>
<div class="a" style="left:1115px;top:452px;width:1px;height:3px;background:#202122"></div>
<div class="a" style="left:894px;top:498.5px;width:245px;text-align:center;font-size:12.35px;line-height:15px;font-weight:bold;white-space:nowrap"><a>Holocene</a> to present (9,500 years ago)</div>
<svg class="a" style="left:897px;top:522.5px" width="239" height="226" viewBox="0 0 239 226">
<defs><filter id="bl2" x="-5%" y="-5%" width="110%" height="110%"><feGaussianBlur stdDeviation="0.8"/></filter>
<clipPath id="cc1"><rect width="165" height="100"/></clipPath>
<clipPath id="cc2"><rect width="70.5" height="100"/></clipPath>
<clipPath id="cc3"><rect width="102" height="124"/></clipPath>
<clipPath id="cc4"><rect width="133" height="124"/></clipPath></defs>
<g clip-path="url(#cc1)"><g filter="url(#bl2)">
<rect width="165" height="100" fill="#ebebeb"/>
<rect x="0" y="0" width="165" height="14" fill="#e6e6e6"/>
<rect x="37" y="14" width="128" height="48" fill="#e9e9e9"/>
<rect x="0" y="0" width="5" height="100" fill="#dadada"/>
<path d="M37 2 V40" stroke="#d2d2d2" stroke-width="1.2"/>
<rect x="5" y="62" width="160" height="38" fill="#f1f1f1"/>
<path d="M12 62 H165" stroke="#dedede" stroke-width="1"/>
<path d="M17 52 Q12 70 24 82 L31 88" stroke="#6a5e52" stroke-width="8" fill="none" stroke-linecap="round"/>
<path d="M26 84 L32 89" stroke="#141010" stroke-width="5.5" stroke-linecap="round"/>
<path d="M14 56 Q24 42 50 40 Q80 39 104 40 L112 46 L114 62 Q90 63 60 62 Q34 64 18 62 Z" fill="#76695a"/>
<path d="M26 45 Q28 54 25 60 M36 42 Q39 52 36 62 M47 41 Q50 51 47 62 M58 40 Q61 50 58 62 M69 40 Q71 50 69 62 M80 40 Q82 50 80 62 M93 41 Q95 51 93 62" stroke="#3a3028" stroke-width="2.2" fill="none"/>
<path d="M100 58 Q125 58 156 58" stroke="#6a5e50" stroke-width="7" fill="none" stroke-linecap="round"/>
<path d="M105 55 V62 M113 55 V62 M121 55 V62 M130 55 V62" stroke="#2a241e" stroke-width="2"/>
<ellipse cx="153" cy="57.5" rx="6" ry="4.5" fill="#3a302a"/>
<ellipse cx="57" cy="61" rx="7" ry="4.5" fill="#1e1a16"/>
<ellipse cx="120" cy="38" rx="13" ry="14" fill="#8e7e68"/>
<path d="M107 34 L109 21 L117 28 Z M123 28 L132 21 L132 36 Z" fill="#9a8a72"/>
<path d="M112 28 Q120 24 128 28" stroke="#4a4034" stroke-width="2" fill="none"/>
<circle cx="114.5" cy="39" r="1.6" fill="#4a4a28"/><circle cx="125" cy="39" r="1.6" fill="#4a4a28"/>
<ellipse cx="120" cy="47" rx="5" ry="3.5" fill="#b8a898"/>
</g></g>
<g transform="translate(168.3,0)" clip-path="url(#cc2)"><g filter="url(#bl2)">
<rect width="70.5" height="100" fill="#dcdcdc"/>
<circle cx="67.0" cy="70.5" r="0.8" fill="#e6e6e6"/>
<circle cx="12.3" cy="5.6" r="1.2" fill="#d4d4d4"/>
<circle cx="22.7" cy="39.8" r="1.1" fill="#e6e6e6"/>
<circle cx="55.0" cy="74.6" r="0.8" fill="#d0d0d0"/>
<circle cx="27.5" cy="77.4" r="1.3" fill="#e6e6e6"/>
<circle cx="37.0" cy="0.8" r="1.4" fill="#eaeaea"/>
<circle cx="3.9" cy="51.8" r="1.4" fill="#d0d0d0"/>
<circle cx="60.4" cy="52.8" r="0.9" fill="#d4d4d4"/>
<circle cx="52.1" cy="62.5" r="1.3" fill="#eaeaea"/>
<circle cx="29.6" cy="32.3" r="1.1" fill="#e6e6e6"/>
<circle cx="38.2" cy="3.6" r="1.2" fill="#d4d4d4"/>
<circle cx="31.8" cy="23.9" r="1.2" fill="#d4d4d4"/>
<circle cx="65.7" cy="12.8" r="1.0" fill="#eaeaea"/>
<circle cx="18.0" cy="52.3" r="1.3" fill="#e6e6e6"/>
<circle cx="69.8" cy="33.8" r="1.3" fill="#e6e6e6"/>
<circle cx="63.3" cy="9.3" r="1.4" fill="#e6e6e6"/>
<circle cx="45.8" cy="78.8" r="1.4" fill="#d4d4d4"/>
<circle cx="36.1" cy="83.5" r="0.9" fill="#d4d4d4"/>
<circle cx="2.7" cy="28.8" r="1.1" fill="#d0d0d0"/>
<circle cx="37.8" cy="72.7" r="1.1" fill="#e6e6e6"/>
<circle cx="67.8" cy="20.0" r="1.2" fill="#d4d4d4"/>
<circle cx="55.5" cy="41.2" r="0.9" fill="#e6e6e6"/>
<circle cx="35.0" cy="4.7" r="1.4" fill="#d4d4d4"/>
<circle cx="10.7" cy="30.7" r="1.0" fill="#d4d4d4"/>
<circle cx="65.5" cy="80.2" r="1.4" fill="#e6e6e6"/>
<circle cx="8.3" cy="15.3" r="0.8" fill="#eaeaea"/>
<circle cx="48.1" cy="39.1" r="0.9" fill="#eaeaea"/>
<circle cx="69.6" cy="17.4" r="1.4" fill="#d0d0d0"/>
<circle cx="51.3" cy="16.6" r="1.1" fill="#eaeaea"/>
<circle cx="57.6" cy="58.8" r="1.3" fill="#d0d0d0"/>
<circle cx="14.7" cy="17.6" r="0.9" fill="#e6e6e6"/>
<circle cx="40.9" cy="3.5" r="0.9" fill="#d0d0d0"/>
<circle cx="66.3" cy="51.2" r="1.0" fill="#d0d0d0"/>
<circle cx="0.6" cy="5.8" r="1.3" fill="#e6e6e6"/>
<circle cx="25.4" cy="26.1" r="0.9" fill="#eaeaea"/>
<circle cx="5.0" cy="22.3" r="1.4" fill="#d0d0d0"/>
<circle cx="28.8" cy="38.4" r="1.5" fill="#d4d4d4"/>
<circle cx="24.4" cy="59.1" r="1.1" fill="#e6e6e6"/>
<circle cx="8.3" cy="10.3" r="1.5" fill="#d0d0d0"/>
<circle cx="5.5" cy="54.5" r="1.5" fill="#e6e6e6"/>
<circle cx="27.3" cy="62.4" r="1.1" fill="#e6e6e6"/>
<circle cx="4.5" cy="35.2" r="1.2" fill="#d0d0d0"/>
<circle cx="46.4" cy="22.5" r="1.3" fill="#d4d4d4"/>
<circle cx="17.3" cy="34.6" r="1.2" fill="#e6e6e6"/>
<circle cx="61.1" cy="32.6" r="1.0" fill="#d0d0d0"/>
<circle cx="57.8" cy="71.4" r="1.2" fill="#d4d4d4"/>
<circle cx="7.0" cy="75.3" r="1.4" fill="#d4d4d4"/>
<circle cx="1.1" cy="2.5" r="1.5" fill="#d0d0d0"/>
<circle cx="57.5" cy="73.3" r="1.1" fill="#e6e6e6"/>
<circle cx="25.5" cy="39.0" r="1.1" fill="#d0d0d0"/>
<circle cx="46.0" cy="5.1" r="1.5" fill="#e6e6e6"/>
<circle cx="70.0" cy="33.2" r="1.3" fill="#e6e6e6"/>
<circle cx="49.4" cy="83.8" r="1.5" fill="#d4d4d4"/>
<circle cx="46.3" cy="66.4" r="1.2" fill="#e6e6e6"/>
<circle cx="41.2" cy="41.8" r="1.2" fill="#e6e6e6"/>
<circle cx="6.8" cy="66.7" r="0.9" fill="#d4d4d4"/>
<circle cx="45.8" cy="52.3" r="1.3" fill="#d0d0d0"/>
<circle cx="68.4" cy="39.8" r="1.1" fill="#d4d4d4"/>
<circle cx="11.0" cy="31.2" r="1.5" fill="#d0d0d0"/>
<circle cx="63.2" cy="2.0" r="1.1" fill="#d0d0d0"/>
<circle cx="39.6" cy="81.9" r="1.0" fill="#d4d4d4"/>
<circle cx="35.8" cy="10.5" r="0.9" fill="#e6e6e6"/>
<circle cx="6.2" cy="43.0" r="1.0" fill="#d0d0d0"/>
<circle cx="17.3" cy="49.6" r="0.8" fill="#eaeaea"/>
<circle cx="15.3" cy="37.9" r="1.1" fill="#d4d4d4"/>
<circle cx="60.0" cy="8.8" r="0.9" fill="#e6e6e6"/>
<circle cx="39.8" cy="14.6" r="1.1" fill="#d4d4d4"/>
<circle cx="0.8" cy="12.9" r="1.3" fill="#d4d4d4"/>
<circle cx="50.2" cy="13.2" r="1.1" fill="#d4d4d4"/>
<circle cx="34.8" cy="76.6" r="1.1" fill="#d4d4d4"/>
<circle cx="21.1" cy="18.0" r="1.3" fill="#d4d4d4"/>
<circle cx="29.6" cy="75.2" r="1.3" fill="#e6e6e6"/>
<circle cx="62.5" cy="79.5" r="1.1" fill="#d4d4d4"/>
<circle cx="21.1" cy="62.1" r="1.0" fill="#d0d0d0"/>
<circle cx="6.0" cy="66.5" r="1.1" fill="#eaeaea"/>
<circle cx="30.3" cy="37.9" r="1.0" fill="#d4d4d4"/>
<circle cx="37.4" cy="13.7" r="1.2" fill="#eaeaea"/>
<circle cx="28.2" cy="18.7" r="1.3" fill="#d4d4d4"/>
<circle cx="2.3" cy="30.2" r="1.2" fill="#e6e6e6"/>
<circle cx="37.1" cy="61.6" r="1.1" fill="#d0d0d0"/>
<rect y="83" width="70.5" height="17" fill="#d6d0c6"/>
<path d="M14 88 Q10 64 28 50 Q40 42 50 46 Q57 58 56 88 Z" fill="#94703e"/>
<path d="M44 34 Q56 40 58 58 L48 62 Q40 48 38 36 Z" fill="#a27a44"/>
<ellipse cx="46" cy="27" rx="9" ry="9.5" fill="#a27a44"/>
<path d="M38 22 L40 10 L46 19 Z M49 19 L56 10 L56 24 Z" fill="#9a723e"/>
<ellipse cx="42" cy="31" rx="4" ry="3" fill="#c8b090"/>
<path d="M14 88 Q32 93 52 86" stroke="#3a2a1a" stroke-width="4" fill="none"/>
<rect x="48" y="60" width="5" height="26" fill="#a88048"/>
<rect x="55" y="82" width="6" height="5" fill="#b08850"/>
</g></g>
<g transform="translate(0,101.5)" clip-path="url(#cc3)"><g filter="url(#bl2)">
<rect width="102" height="124" fill="#4a4240"/>
<rect width="102" height="18" fill="#7a7272"/>
<ellipse cx="30" cy="26" rx="26" ry="6" fill="#6a8648"/>
<ellipse cx="88" cy="12" rx="12" ry="3.5" fill="#7a8a5a"/>
<ellipse cx="46.0" cy="84.2" rx="4.3" ry="1.6" fill="#3e3834" transform="rotate(91 46.0 84.2)"/>
<ellipse cx="18.1" cy="107.4" rx="3.2" ry="1.7" fill="#6e6662" transform="rotate(34 18.1 107.4)"/>
<ellipse cx="30.2" cy="39.6" rx="4.0" ry="1.8" fill="#6e6662" transform="rotate(8 30.2 39.6)"/>
<ellipse cx="100.3" cy="93.1" rx="3.5" ry="1.2" fill="#3e3834" transform="rotate(3 100.3 93.1)"/>
<ellipse cx="4.7" cy="34.4" rx="4.2" ry="1.7" fill="#5e5652" transform="rotate(140 4.7 34.4)"/>
<ellipse cx="44.7" cy="111.0" rx="3.3" ry="1.8" fill="#7c7470" transform="rotate(90 44.7 111.0)"/>
<ellipse cx="7.0" cy="93.2" rx="3.0" ry="1.7" fill="#2a2422" transform="rotate(168 7.0 93.2)"/>
<ellipse cx="73.0" cy="61.0" rx="2.6" ry="1.3" fill="#2a2422" transform="rotate(13 73.0 61.0)"/>
<ellipse cx="40.4" cy="111.4" rx="3.0" ry="2.1" fill="#2a2422" transform="rotate(153 40.4 111.4)"/>
<ellipse cx="20.6" cy="119.1" rx="2.1" ry="1.5" fill="#6e6662" transform="rotate(128 20.6 119.1)"/>
<ellipse cx="5.7" cy="90.8" rx="3.9" ry="1.3" fill="#5e5652" transform="rotate(16 5.7 90.8)"/>
<ellipse cx="-0.4" cy="70.0" rx="4.3" ry="1.2" fill="#2a2422" transform="rotate(127 -0.4 70.0)"/>
<ellipse cx="4.3" cy="106.7" rx="2.4" ry="1.7" fill="#342e2a" transform="rotate(81 4.3 106.7)"/>
<ellipse cx="102.4" cy="104.1" rx="3.0" ry="1.5" fill="#342e2a" transform="rotate(71 102.4 104.1)"/>
<ellipse cx="-2.0" cy="113.1" rx="4.4" ry="1.7" fill="#2a2422" transform="rotate(180 -2.0 113.1)"/>
<ellipse cx="20.3" cy="68.5" rx="4.1" ry="1.8" fill="#342e2a" transform="rotate(18 20.3 68.5)"/>
<ellipse cx="20.6" cy="55.5" rx="3.9" ry="1.4" fill="#2a2422" transform="rotate(53 20.6 55.5)"/>
<ellipse cx="5.9" cy="50.8" rx="3.6" ry="1.0" fill="#3e3834" transform="rotate(66 5.9 50.8)"/>
<ellipse cx="46.0" cy="122.1" rx="3.2" ry="1.7" fill="#342e2a" transform="rotate(156 46.0 122.1)"/>
<ellipse cx="64.5" cy="60.5" rx="2.6" ry="1.7" fill="#342e2a" transform="rotate(131 64.5 60.5)"/>
<ellipse cx="76.4" cy="120.3" rx="2.5" ry="2.1" fill="#3e3834" transform="rotate(159 76.4 120.3)"/>
<ellipse cx="6.3" cy="35.5" rx="2.3" ry="1.6" fill="#7c7470" transform="rotate(46 6.3 35.5)"/>
<ellipse cx="72.7" cy="55.4" rx="4.1" ry="1.7" fill="#342e2a" transform="rotate(53 72.7 55.4)"/>
<ellipse cx="96.5" cy="123.8" rx="2.3" ry="1.6" fill="#3e3834" transform="rotate(118 96.5 123.8)"/>
<ellipse cx="63.1" cy="57.6" rx="4.3" ry="1.2" fill="#5e5652" transform="rotate(3 63.1 57.6)"/>
<ellipse cx="41.6" cy="54.7" rx="2.1" ry="1.3" fill="#342e2a" transform="rotate(96 41.6 54.7)"/>
<ellipse cx="7.8" cy="44.1" rx="3.1" ry="1.4" fill="#3e3834" transform="rotate(132 7.8 44.1)"/>
<ellipse cx="60.0" cy="44.3" rx="2.1" ry="1.0" fill="#7c7470" transform="rotate(164 60.0 44.3)"/>
<ellipse cx="31.1" cy="34.2" rx="3.5" ry="1.1" fill="#5e5652" transform="rotate(12 31.1 34.2)"/>
<ellipse cx="31.8" cy="125.9" rx="2.2" ry="1.7" fill="#7c7470" transform="rotate(133 31.8 125.9)"/>
<ellipse cx="76.1" cy="43.3" rx="4.4" ry="1.4" fill="#6e6662" transform="rotate(15 76.1 43.3)"/>
<ellipse cx="93.5" cy="113.8" rx="3.0" ry="1.9" fill="#3e3834" transform="rotate(155 93.5 113.8)"/>
<ellipse cx="-0.5" cy="93.9" rx="2.9" ry="1.0" fill="#2a2422" transform="rotate(13 -0.5 93.9)"/>
<ellipse cx="65.8" cy="125.4" rx="4.2" ry="1.9" fill="#7c7470" transform="rotate(70 65.8 125.4)"/>
<ellipse cx="71.6" cy="74.5" rx="3.2" ry="1.6" fill="#3e3834" transform="rotate(93 71.6 74.5)"/>
<ellipse cx="1.2" cy="88.1" rx="3.2" ry="1.3" fill="#6e6662" transform="rotate(126 1.2 88.1)"/>
<ellipse cx="80.7" cy="93.7" rx="3.2" ry="2.1" fill="#342e2a" transform="rotate(66 80.7 93.7)"/>
<ellipse cx="69.9" cy="50.2" rx="2.4" ry="2.1" fill="#6e6662" transform="rotate(119 69.9 50.2)"/>
<ellipse cx="50.8" cy="53.9" rx="3.0" ry="1.3" fill="#342e2a" transform="rotate(114 50.8 53.9)"/>
<ellipse cx="91.3" cy="67.5" rx="3.5" ry="1.4" fill="#6e6662" transform="rotate(25 91.3 67.5)"/>
<ellipse cx="35.2" cy="116.1" rx="2.1" ry="1.1" fill="#342e2a" transform="rotate(176 35.2 116.1)"/>
<ellipse cx="10.0" cy="75.8" rx="4.3" ry="2.0" fill="#3e3834" transform="rotate(69 10.0 75.8)"/>
<ellipse cx="50.4" cy="61.0" rx="4.1" ry="2.2" fill="#2a2422" transform="rotate(81 50.4 61.0)"/>
<ellipse cx="85.8" cy="57.4" rx="3.5" ry="1.8" fill="#5e5652" transform="rotate(51 85.8 57.4)"/>
<ellipse cx="30.8" cy="106.2" rx="2.0" ry="1.2" fill="#2a2422" transform="rotate(82 30.8 106.2)"/>
<ellipse cx="79.5" cy="56.3" rx="3.9" ry="2.0" fill="#2a2422" transform="rotate(177 79.5 56.3)"/>
<ellipse cx="45.3" cy="90.8" rx="3.6" ry="2.0" fill="#7c7470" transform="rotate(173 45.3 90.8)"/>
<ellipse cx="19.0" cy="109.3" rx="2.6" ry="1.9" fill="#3e3834" transform="rotate(136 19.0 109.3)"/>
<ellipse cx="73.7" cy="48.0" rx="2.7" ry="1.4" fill="#3e3834" transform="rotate(126 73.7 48.0)"/>
<ellipse cx="51.0" cy="125.7" rx="2.4" ry="2.0" fill="#342e2a" transform="rotate(126 51.0 125.7)"/>
<ellipse cx="7.2" cy="119.6" rx="3.8" ry="1.2" fill="#7c7470" transform="rotate(82 7.2 119.6)"/>
<ellipse cx="92.1" cy="31.6" rx="3.4" ry="1.8" fill="#5e5652" transform="rotate(90 92.1 31.6)"/>
<ellipse cx="47.2" cy="92.9" rx="2.5" ry="1.9" fill="#7c7470" transform="rotate(147 47.2 92.9)"/>
<ellipse cx="96.0" cy="42.7" rx="2.6" ry="1.5" fill="#5e5652" transform="rotate(16 96.0 42.7)"/>
<ellipse cx="54.9" cy="106.1" rx="2.8" ry="2.1" fill="#5e5652" transform="rotate(154 54.9 106.1)"/>
<ellipse cx="51.5" cy="34.5" rx="2.9" ry="1.5" fill="#2a2422" transform="rotate(50 51.5 34.5)"/>
<ellipse cx="21.1" cy="113.4" rx="3.1" ry="1.0" fill="#7c7470" transform="rotate(96 21.1 113.4)"/>
<ellipse cx="81.5" cy="44.3" rx="2.4" ry="1.6" fill="#7c7470" transform="rotate(130 81.5 44.3)"/>
<ellipse cx="71.1" cy="120.8" rx="3.2" ry="2.1" fill="#342e2a" transform="rotate(15 71.1 120.8)"/>
<ellipse cx="44.6" cy="84.1" rx="4.1" ry="1.7" fill="#3e3834" transform="rotate(30 44.6 84.1)"/>
<ellipse cx="87.4" cy="84.2" rx="2.8" ry="1.5" fill="#3e3834" transform="rotate(152 87.4 84.2)"/>
<ellipse cx="20.1" cy="111.8" rx="4.4" ry="1.6" fill="#342e2a" transform="rotate(103 20.1 111.8)"/>
<ellipse cx="41.6" cy="41.9" rx="2.0" ry="1.5" fill="#2a2422" transform="rotate(97 41.6 41.9)"/>
<ellipse cx="52.7" cy="69.1" rx="4.0" ry="1.7" fill="#7c7470" transform="rotate(88 52.7 69.1)"/>
<ellipse cx="15.7" cy="119.4" rx="3.1" ry="2.1" fill="#6e6662" transform="rotate(144 15.7 119.4)"/>
<ellipse cx="26.5" cy="76.0" rx="2.3" ry="1.5" fill="#6e6662" transform="rotate(147 26.5 76.0)"/>
<ellipse cx="53.6" cy="41.3" rx="3.0" ry="1.0" fill="#7c7470" transform="rotate(47 53.6 41.3)"/>
<ellipse cx="80.6" cy="33.2" rx="2.5" ry="1.3" fill="#5e5652" transform="rotate(124 80.6 33.2)"/>
<ellipse cx="74.7" cy="54.2" rx="3.2" ry="1.6" fill="#3e3834" transform="rotate(105 74.7 54.2)"/>
<ellipse cx="64.1" cy="99.2" rx="3.8" ry="2.1" fill="#7c7470" transform="rotate(4 64.1 99.2)"/>
<ellipse cx="41.8" cy="81.3" rx="2.4" ry="1.2" fill="#7c7470" transform="rotate(114 41.8 81.3)"/>
<ellipse cx="21.1" cy="51.5" rx="3.4" ry="1.7" fill="#7c7470" transform="rotate(25 21.1 51.5)"/>
<ellipse cx="64.6" cy="64.0" rx="2.5" ry="1.7" fill="#342e2a" transform="rotate(160 64.6 64.0)"/>
<ellipse cx="21.1" cy="125.8" rx="4.2" ry="1.2" fill="#7c7470" transform="rotate(43 21.1 125.8)"/>
<ellipse cx="7.3" cy="67.9" rx="3.1" ry="2.1" fill="#7c7470" transform="rotate(98 7.3 67.9)"/>
<ellipse cx="11.4" cy="69.3" rx="3.7" ry="1.0" fill="#7c7470" transform="rotate(36 11.4 69.3)"/>
<ellipse cx="35.9" cy="109.0" rx="2.9" ry="1.8" fill="#5e5652" transform="rotate(114 35.9 109.0)"/>
<ellipse cx="51.3" cy="96.1" rx="2.5" ry="1.1" fill="#2a2422" transform="rotate(19 51.3 96.1)"/>
<ellipse cx="78.8" cy="89.3" rx="4.3" ry="1.6" fill="#2a2422" transform="rotate(34 78.8 89.3)"/>
<ellipse cx="19.6" cy="110.8" rx="4.5" ry="2.1" fill="#2a2422" transform="rotate(17 19.6 110.8)"/>
<ellipse cx="12.3" cy="95.7" rx="2.2" ry="1.1" fill="#6e6662" transform="rotate(70 12.3 95.7)"/>
<ellipse cx="52.6" cy="71.9" rx="3.5" ry="1.0" fill="#342e2a" transform="rotate(126 52.6 71.9)"/>
<ellipse cx="17.2" cy="74.1" rx="3.8" ry="1.5" fill="#342e2a" transform="rotate(35 17.2 74.1)"/>
<ellipse cx="8.0" cy="106.3" rx="2.8" ry="1.1" fill="#7c7470" transform="rotate(152 8.0 106.3)"/>
<ellipse cx="97.6" cy="85.1" rx="2.5" ry="1.7" fill="#5e5652" transform="rotate(61 97.6 85.1)"/>
<ellipse cx="27.6" cy="42.0" rx="3.9" ry="1.2" fill="#342e2a" transform="rotate(168 27.6 42.0)"/>
<ellipse cx="93.0" cy="114.6" rx="3.7" ry="1.9" fill="#6e6662" transform="rotate(138 93.0 114.6)"/>
<ellipse cx="19.9" cy="48.6" rx="4.0" ry="1.4" fill="#5e5652" transform="rotate(18 19.9 48.6)"/>
<ellipse cx="103.0" cy="116.8" rx="2.1" ry="1.3" fill="#5e5652" transform="rotate(173 103.0 116.8)"/>
<ellipse cx="33.8" cy="93.7" rx="3.4" ry="1.6" fill="#6e6662" transform="rotate(70 33.8 93.7)"/>
<ellipse cx="66.1" cy="97.6" rx="3.9" ry="2.2" fill="#3e3834" transform="rotate(4 66.1 97.6)"/>
<ellipse cx="9.5" cy="53.5" rx="3.1" ry="1.6" fill="#7c7470" transform="rotate(137 9.5 53.5)"/>
<ellipse cx="37.8" cy="40.4" rx="2.6" ry="2.1" fill="#3e3834" transform="rotate(99 37.8 40.4)"/>
<ellipse cx="42.1" cy="80.5" rx="4.1" ry="1.1" fill="#7c7470" transform="rotate(80 42.1 80.5)"/>
<ellipse cx="6.1" cy="87.8" rx="3.9" ry="1.1" fill="#342e2a" transform="rotate(167 6.1 87.8)"/>
<ellipse cx="38.9" cy="123.2" rx="4.1" ry="1.7" fill="#6e6662" transform="rotate(107 38.9 123.2)"/>
<ellipse cx="98.2" cy="71.0" rx="3.3" ry="1.7" fill="#5e5652" transform="rotate(66 98.2 71.0)"/>
<ellipse cx="49.2" cy="56.6" rx="4.3" ry="1.8" fill="#2a2422" transform="rotate(135 49.2 56.6)"/>
<ellipse cx="-0.5" cy="54.3" rx="2.1" ry="1.2" fill="#6e6662" transform="rotate(136 -0.5 54.3)"/>
<ellipse cx="3.6" cy="60.9" rx="3.0" ry="1.7" fill="#5e5652" transform="rotate(130 3.6 60.9)"/>
<ellipse cx="5.8" cy="117.0" rx="3.1" ry="1.6" fill="#342e2a" transform="rotate(175 5.8 117.0)"/>
<ellipse cx="2.8" cy="40.4" rx="4.0" ry="2.1" fill="#342e2a" transform="rotate(26 2.8 40.4)"/>
<ellipse cx="62.0" cy="41.9" rx="3.6" ry="1.5" fill="#2a2422" transform="rotate(37 62.0 41.9)"/>
<ellipse cx="35.8" cy="45.7" rx="2.9" ry="1.2" fill="#3e3834" transform="rotate(75 35.8 45.7)"/>
<ellipse cx="25.8" cy="86.3" rx="3.0" ry="1.9" fill="#342e2a" transform="rotate(96 25.8 86.3)"/>
<ellipse cx="99.0" cy="100.8" rx="2.6" ry="1.1" fill="#3e3834" transform="rotate(161 99.0 100.8)"/>
<ellipse cx="64.2" cy="65.1" rx="2.7" ry="1.8" fill="#3e3834" transform="rotate(102 64.2 65.1)"/>
<ellipse cx="18.1" cy="57.5" rx="2.6" ry="2.1" fill="#7c7470" transform="rotate(90 18.1 57.5)"/>
<ellipse cx="95.1" cy="114.5" rx="2.1" ry="1.1" fill="#6e6662" transform="rotate(49 95.1 114.5)"/>
<ellipse cx="0.9" cy="34.6" rx="2.6" ry="1.3" fill="#7c7470" transform="rotate(136 0.9 34.6)"/>
<ellipse cx="15.1" cy="53.3" rx="4.5" ry="1.6" fill="#5e5652" transform="rotate(64 15.1 53.3)"/>
<ellipse cx="34.4" cy="101.8" rx="4.1" ry="1.1" fill="#3e3834" transform="rotate(22 34.4 101.8)"/>
<ellipse cx="86.8" cy="104.0" rx="3.1" ry="1.9" fill="#342e2a" transform="rotate(70 86.8 104.0)"/>
<ellipse cx="37.1" cy="93.1" rx="4.5" ry="1.4" fill="#7c7470" transform="rotate(99 37.1 93.1)"/>
<ellipse cx="85.6" cy="48.5" rx="3.6" ry="1.7" fill="#5e5652" transform="rotate(83 85.6 48.5)"/>
<ellipse cx="6.3" cy="38.9" rx="3.4" ry="1.6" fill="#5e5652" transform="rotate(123 6.3 38.9)"/>
<ellipse cx="85.3" cy="31.9" rx="2.8" ry="2.1" fill="#7c7470" transform="rotate(109 85.3 31.9)"/>
<ellipse cx="30.2" cy="99.9" rx="3.7" ry="1.3" fill="#5e5652" transform="rotate(26 30.2 99.9)"/>
<ellipse cx="67.7" cy="62.1" rx="4.3" ry="1.4" fill="#3e3834" transform="rotate(79 67.7 62.1)"/>
<ellipse cx="95.4" cy="120.3" rx="4.3" ry="1.5" fill="#5e5652" transform="rotate(145 95.4 120.3)"/>
<ellipse cx="46.6" cy="52.0" rx="4.4" ry="1.9" fill="#2a2422" transform="rotate(93 46.6 52.0)"/>
<ellipse cx="36.3" cy="65.7" rx="2.9" ry="1.5" fill="#342e2a" transform="rotate(70 36.3 65.7)"/>
<ellipse cx="76.3" cy="66.0" rx="3.0" ry="1.2" fill="#342e2a" transform="rotate(106 76.3 66.0)"/>
<ellipse cx="16.7" cy="103.1" rx="4.2" ry="1.3" fill="#3e3834" transform="rotate(4 16.7 103.1)"/>
<ellipse cx="4.1" cy="46.1" rx="2.7" ry="1.0" fill="#6e6662" transform="rotate(152 4.1 46.1)"/>
<ellipse cx="4.8" cy="82.9" rx="4.0" ry="1.1" fill="#7c7470" transform="rotate(15 4.8 82.9)"/>
<ellipse cx="9.2" cy="60.8" rx="2.1" ry="1.8" fill="#7c7470" transform="rotate(18 9.2 60.8)"/>
<ellipse cx="42.7" cy="98.7" rx="3.2" ry="2.1" fill="#6e6662" transform="rotate(61 42.7 98.7)"/>
<ellipse cx="39.8" cy="63.1" rx="4.4" ry="1.8" fill="#3e3834" transform="rotate(89 39.8 63.1)"/>
<ellipse cx="83.3" cy="37.9" rx="3.5" ry="1.1" fill="#7c7470" transform="rotate(136 83.3 37.9)"/>
<ellipse cx="35.0" cy="31.4" rx="2.9" ry="1.1" fill="#3e3834" transform="rotate(84 35.0 31.4)"/>
<ellipse cx="65.9" cy="80.8" rx="3.8" ry="2.0" fill="#6e6662" transform="rotate(76 65.9 80.8)"/>
<ellipse cx="95.0" cy="54.3" rx="2.4" ry="1.8" fill="#5e5652" transform="rotate(123 95.0 54.3)"/>
<ellipse cx="19.7" cy="71.4" rx="2.7" ry="2.2" fill="#5e5652" transform="rotate(11 19.7 71.4)"/>
<ellipse cx="75.5" cy="59.8" rx="2.4" ry="2.1" fill="#6e6662" transform="rotate(164 75.5 59.8)"/>
<ellipse cx="-0.2" cy="76.7" rx="4.0" ry="1.4" fill="#5e5652" transform="rotate(36 -0.2 76.7)"/>
<ellipse cx="21.0" cy="53.4" rx="3.8" ry="1.7" fill="#342e2a" transform="rotate(40 21.0 53.4)"/>
<ellipse cx="92.8" cy="69.2" rx="4.3" ry="2.1" fill="#3e3834" transform="rotate(113 92.8 69.2)"/>
<ellipse cx="48.8" cy="55.7" rx="4.2" ry="2.1" fill="#3e3834" transform="rotate(62 48.8 55.7)"/>
<ellipse cx="79.8" cy="39.8" rx="4.2" ry="1.5" fill="#342e2a" transform="rotate(39 79.8 39.8)"/>
<ellipse cx="83.0" cy="67.6" rx="3.3" ry="1.6" fill="#2a2422" transform="rotate(49 83.0 67.6)"/>
<ellipse cx="67.7" cy="53.6" rx="2.0" ry="1.6" fill="#342e2a" transform="rotate(67 67.7 53.6)"/>
<ellipse cx="73.6" cy="88.6" rx="2.4" ry="1.2" fill="#5e5652" transform="rotate(58 73.6 88.6)"/>
<ellipse cx="94.3" cy="108.0" rx="2.3" ry="1.9" fill="#3e3834" transform="rotate(112 94.3 108.0)"/>
<ellipse cx="54.7" cy="45.3" rx="3.9" ry="1.0" fill="#342e2a" transform="rotate(148 54.7 45.3)"/>
<ellipse cx="85.1" cy="38.8" rx="2.7" ry="1.9" fill="#6e6662" transform="rotate(17 85.1 38.8)"/>
<ellipse cx="71.5" cy="38.9" rx="3.9" ry="1.7" fill="#2a2422" transform="rotate(91 71.5 38.9)"/>
<ellipse cx="81.7" cy="70.6" rx="4.3" ry="1.1" fill="#342e2a" transform="rotate(149 81.7 70.6)"/>
<ellipse cx="1.9" cy="70.2" rx="3.2" ry="2.1" fill="#5e5652" transform="rotate(174 1.9 70.2)"/>
<ellipse cx="30.9" cy="38.2" rx="2.8" ry="1.6" fill="#5e5652" transform="rotate(129 30.9 38.2)"/>
<ellipse cx="5.9" cy="44.4" rx="3.7" ry="1.8" fill="#2a2422" transform="rotate(134 5.9 44.4)"/>
<ellipse cx="67.3" cy="32.2" rx="2.9" ry="1.9" fill="#3e3834" transform="rotate(43 67.3 32.2)"/>
<ellipse cx="10.0" cy="104.3" rx="4.1" ry="2.0" fill="#3e3834" transform="rotate(129 10.0 104.3)"/>
<ellipse cx="14.1" cy="90.6" rx="4.3" ry="1.9" fill="#6e6662" transform="rotate(172 14.1 90.6)"/>
<ellipse cx="56.9" cy="39.3" rx="2.5" ry="1.5" fill="#5e5652" transform="rotate(20 56.9 39.3)"/>
<ellipse cx="98.2" cy="84.5" rx="3.8" ry="1.4" fill="#2a2422" transform="rotate(149 98.2 84.5)"/>
<ellipse cx="8.8" cy="90.1" rx="2.3" ry="1.8" fill="#342e2a" transform="rotate(32 8.8 90.1)"/>
<ellipse cx="40.6" cy="110.5" rx="3.5" ry="1.1" fill="#342e2a" transform="rotate(41 40.6 110.5)"/>
<ellipse cx="102.7" cy="72.2" rx="3.9" ry="1.4" fill="#3e3834" transform="rotate(148 102.7 72.2)"/>
<ellipse cx="12.7" cy="50.5" rx="2.4" ry="1.8" fill="#6e6662" transform="rotate(87 12.7 50.5)"/>
<ellipse cx="64.0" cy="100.1" rx="3.5" ry="1.4" fill="#342e2a" transform="rotate(142 64.0 100.1)"/>
<ellipse cx="68.0" cy="88.8" rx="2.0" ry="1.4" fill="#7c7470" transform="rotate(62 68.0 88.8)"/>
<ellipse cx="44.8" cy="83.9" rx="2.5" ry="1.4" fill="#2a2422" transform="rotate(53 44.8 83.9)"/>
<ellipse cx="62.8" cy="46.0" rx="3.9" ry="2.1" fill="#5e5652" transform="rotate(99 62.8 46.0)"/>
<ellipse cx="62.9" cy="79.8" rx="3.4" ry="1.2" fill="#7c7470" transform="rotate(168 62.9 79.8)"/>
<ellipse cx="72.9" cy="119.9" rx="3.4" ry="1.0" fill="#2a2422" transform="rotate(119 72.9 119.9)"/>
<ellipse cx="12.4" cy="76.4" rx="3.0" ry="1.4" fill="#5e5652" transform="rotate(17 12.4 76.4)"/>
<ellipse cx="26.2" cy="114.9" rx="3.1" ry="1.9" fill="#3e3834" transform="rotate(43 26.2 114.9)"/>
<ellipse cx="55.6" cy="84.3" rx="3.4" ry="1.3" fill="#5e5652" transform="rotate(164 55.6 84.3)"/>
<ellipse cx="61.8" cy="42.7" rx="4.1" ry="1.3" fill="#342e2a" transform="rotate(161 61.8 42.7)"/>
<path d="M34 118 Q30 90 44 68 L80 68 Q92 90 88 118 Z" fill="#d48a44"/>
<ellipse cx="62" cy="62" rx="16" ry="15" fill="#f4f0ec"/>
<path d="M55 76 Q62 72 70 76 L68 112 L57 112 Z" fill="#eeeae4"/>
<ellipse cx="61" cy="37" rx="17" ry="15" fill="#d08840"/>
<path d="M44 32 L44 20 L55 26 Z M68 26 L78 19 L78 32 Z" fill="#c88038"/>
<ellipse cx="61" cy="47" rx="7" ry="6" fill="#f0e8e0"/>

<circle cx="54" cy="40" r="1.8" fill="#7a9a48"/><circle cx="68" cy="40" r="1.8" fill="#7a9a48"/>
<path d="M40 92 Q46 100 44 108 M82 92 Q76 100 78 108" stroke="#b86a30" stroke-width="2" fill="none"/>
<rect x="51" y="110" width="8" height="14" fill="#f4f0ea"/><rect x="63" y="110" width="8" height="14" fill="#f4f0ea"/>
<ellipse cx="40" cy="116" rx="7" ry="6" fill="#ece8e2"/><ellipse cx="82" cy="116" rx="6" ry="6" fill="#ece8e2"/>
</g></g>
<g transform="translate(105.7,101.5)" clip-path="url(#cc4)"><g filter="url(#bl2)">
<rect width="133" height="124" fill="#dad8d4"/>
<circle cx="100.9" cy="45.0" r="0.9" fill="#e4e2de"/>
<circle cx="72.9" cy="9.5" r="1.1" fill="#cfccc6"/>
<circle cx="104.1" cy="115.3" r="1.0" fill="#e4e2de"/>
<circle cx="89.3" cy="91.5" r="1.3" fill="#e8e6e2"/>
<circle cx="85.2" cy="94.7" r="1.0" fill="#e4e2de"/>
<circle cx="62.2" cy="17.7" r="0.9" fill="#e8e6e2"/>
<circle cx="54.0" cy="41.7" r="1.0" fill="#e4e2de"/>
<circle cx="75.5" cy="41.2" r="1.4" fill="#cfccc6"/>
<circle cx="104.7" cy="50.0" r="1.3" fill="#e8e6e2"/>
<circle cx="62.5" cy="51.0" r="1.4" fill="#e8e6e2"/>
<circle cx="64.6" cy="123.3" r="1.5" fill="#e8e6e2"/>
<circle cx="15.6" cy="14.2" r="1.2" fill="#d2cfca"/>
<circle cx="57.5" cy="112.1" r="1.5" fill="#d2cfca"/>
<circle cx="39.4" cy="76.4" r="1.4" fill="#e8e6e2"/>
<circle cx="79.5" cy="93.2" r="1.5" fill="#d2cfca"/>
<circle cx="116.6" cy="30.3" r="1.0" fill="#e8e6e2"/>
<circle cx="116.1" cy="120.6" r="1.4" fill="#e8e6e2"/>
<circle cx="70.0" cy="29.7" r="1.3" fill="#d2cfca"/>
<circle cx="125.1" cy="109.1" r="1.5" fill="#d2cfca"/>
<circle cx="56.0" cy="99.9" r="1.3" fill="#e4e2de"/>
<circle cx="56.1" cy="15.2" r="0.9" fill="#cfccc6"/>
<circle cx="105.4" cy="15.4" r="0.8" fill="#e8e6e2"/>
<circle cx="32.4" cy="37.1" r="0.9" fill="#d2cfca"/>
<circle cx="58.6" cy="55.8" r="0.9" fill="#e8e6e2"/>
<circle cx="92.1" cy="28.6" r="0.8" fill="#d2cfca"/>
<circle cx="119.5" cy="38.2" r="0.9" fill="#e8e6e2"/>
<circle cx="103.3" cy="96.3" r="1.0" fill="#e4e2de"/>
<circle cx="114.2" cy="85.9" r="1.0" fill="#cfccc6"/>
<circle cx="111.4" cy="43.9" r="0.8" fill="#e8e6e2"/>
<circle cx="84.5" cy="86.5" r="1.2" fill="#e4e2de"/>
<circle cx="31.4" cy="117.7" r="1.3" fill="#cfccc6"/>
<circle cx="40.7" cy="101.4" r="1.5" fill="#d2cfca"/>
<circle cx="94.8" cy="16.7" r="1.1" fill="#e8e6e2"/>
<circle cx="22.5" cy="106.8" r="1.4" fill="#cfccc6"/>
<circle cx="26.1" cy="22.4" r="1.2" fill="#e4e2de"/>
<circle cx="39.3" cy="33.9" r="1.3" fill="#cfccc6"/>
<circle cx="30.5" cy="37.3" r="1.3" fill="#e4e2de"/>
<circle cx="36.8" cy="79.4" r="1.2" fill="#cfccc6"/>
<circle cx="10.1" cy="113.7" r="1.2" fill="#cfccc6"/>
<circle cx="6.0" cy="74.4" r="1.2" fill="#d2cfca"/>
<circle cx="56.3" cy="70.5" r="1.0" fill="#e4e2de"/>
<circle cx="100.5" cy="30.5" r="1.4" fill="#d2cfca"/>
<circle cx="3.8" cy="98.0" r="1.6" fill="#e4e2de"/>
<circle cx="4.5" cy="57.2" r="0.8" fill="#e8e6e2"/>
<circle cx="118.6" cy="7.5" r="1.2" fill="#cfccc6"/>
<circle cx="85.8" cy="44.6" r="1.4" fill="#e8e6e2"/>
<circle cx="68.7" cy="62.7" r="1.3" fill="#e4e2de"/>
<circle cx="102.6" cy="13.9" r="1.0" fill="#e8e6e2"/>
<circle cx="58.6" cy="95.9" r="1.0" fill="#e4e2de"/>
<circle cx="72.4" cy="105.7" r="1.0" fill="#e8e6e2"/>
<circle cx="26.9" cy="120.4" r="1.3" fill="#cfccc6"/>
<circle cx="116.1" cy="22.3" r="1.3" fill="#e4e2de"/>
<circle cx="80.9" cy="100.0" r="1.4" fill="#e8e6e2"/>
<circle cx="113.9" cy="3.8" r="1.5" fill="#cfccc6"/>
<circle cx="75.7" cy="67.4" r="1.3" fill="#e4e2de"/>
<circle cx="7.2" cy="52.7" r="1.5" fill="#d2cfca"/>
<circle cx="98.2" cy="96.8" r="0.9" fill="#e8e6e2"/>
<circle cx="109.1" cy="21.3" r="1.0" fill="#d2cfca"/>
<circle cx="66.1" cy="81.7" r="0.8" fill="#e8e6e2"/>
<circle cx="54.6" cy="45.2" r="1.4" fill="#e4e2de"/>
<circle cx="127.3" cy="15.9" r="0.9" fill="#e4e2de"/>
<circle cx="60.6" cy="92.4" r="0.8" fill="#cfccc6"/>
<circle cx="54.5" cy="65.2" r="1.1" fill="#cfccc6"/>
<circle cx="39.6" cy="52.6" r="1.6" fill="#cfccc6"/>
<circle cx="90.4" cy="88.9" r="1.0" fill="#e4e2de"/>
<circle cx="15.8" cy="106.1" r="1.2" fill="#e8e6e2"/>
<circle cx="124.0" cy="45.1" r="1.6" fill="#d2cfca"/>
<circle cx="122.8" cy="27.1" r="1.1" fill="#e4e2de"/>
<circle cx="86.4" cy="7.3" r="1.3" fill="#d2cfca"/>
<circle cx="121.3" cy="109.7" r="1.2" fill="#e4e2de"/>
<circle cx="52.3" cy="104.5" r="1.1" fill="#e8e6e2"/>
<circle cx="6.6" cy="51.9" r="0.9" fill="#e4e2de"/>
<circle cx="73.1" cy="20.3" r="1.1" fill="#e4e2de"/>
<circle cx="79.0" cy="94.2" r="1.2" fill="#e8e6e2"/>
<circle cx="132.1" cy="84.2" r="1.0" fill="#e8e6e2"/>
<circle cx="50.9" cy="9.0" r="1.1" fill="#d2cfca"/>
<circle cx="36.5" cy="2.3" r="1.4" fill="#e4e2de"/>
<circle cx="68.1" cy="70.4" r="1.0" fill="#e4e2de"/>
<circle cx="48.0" cy="19.0" r="0.9" fill="#d2cfca"/>
<circle cx="32.0" cy="104.1" r="0.8" fill="#cfccc6"/>
<circle cx="42.8" cy="47.7" r="1.5" fill="#cfccc6"/>
<circle cx="50.7" cy="31.8" r="1.0" fill="#cfccc6"/>
<circle cx="80.9" cy="60.6" r="0.9" fill="#e4e2de"/>
<circle cx="79.2" cy="3.9" r="1.1" fill="#d2cfca"/>
<circle cx="63.7" cy="86.1" r="1.1" fill="#d2cfca"/>
<circle cx="60.1" cy="46.7" r="1.5" fill="#e4e2de"/>
<circle cx="71.2" cy="55.7" r="1.1" fill="#e4e2de"/>
<circle cx="115.2" cy="28.0" r="1.1" fill="#d2cfca"/>
<circle cx="81.3" cy="17.4" r="1.4" fill="#cfccc6"/>
<circle cx="64.2" cy="1.4" r="1.3" fill="#d2cfca"/>
<circle cx="8.9" cy="105.8" r="1.3" fill="#d2cfca"/>
<circle cx="127.0" cy="107.7" r="1.4" fill="#e4e2de"/>
<circle cx="34.5" cy="99.1" r="1.1" fill="#cfccc6"/>
<circle cx="8.0" cy="47.5" r="1.0" fill="#d2cfca"/>
<circle cx="93.5" cy="27.5" r="1.0" fill="#e8e6e2"/>
<circle cx="102.2" cy="43.5" r="1.2" fill="#e4e2de"/>
<circle cx="98.8" cy="112.5" r="1.2" fill="#e4e2de"/>
<circle cx="34.2" cy="105.8" r="1.4" fill="#d2cfca"/>
<circle cx="3.1" cy="48.5" r="1.5" fill="#d2cfca"/>
<circle cx="121.4" cy="33.7" r="1.2" fill="#e8e6e2"/>
<circle cx="77.9" cy="58.1" r="1.5" fill="#d2cfca"/>
<circle cx="9.6" cy="4.4" r="1.5" fill="#d2cfca"/>
<circle cx="75.2" cy="32.5" r="1.3" fill="#e4e2de"/>
<circle cx="51.1" cy="42.3" r="0.8" fill="#d2cfca"/>
<circle cx="94.1" cy="26.9" r="1.3" fill="#cfccc6"/>
<circle cx="82.6" cy="51.0" r="0.9" fill="#e8e6e2"/>
<circle cx="9.1" cy="57.5" r="1.1" fill="#e8e6e2"/>
<circle cx="121.0" cy="4.7" r="1.3" fill="#e4e2de"/>
<circle cx="36.3" cy="61.4" r="1.6" fill="#e8e6e2"/>
<circle cx="19.9" cy="23.9" r="1.0" fill="#e4e2de"/>
<circle cx="29.3" cy="64.6" r="0.8" fill="#e8e6e2"/>
<circle cx="72.8" cy="105.3" r="1.3" fill="#cfccc6"/>
<circle cx="74.6" cy="103.1" r="1.0" fill="#d2cfca"/>
<circle cx="13.8" cy="2.4" r="1.4" fill="#e4e2de"/>
<circle cx="91.3" cy="119.5" r="0.9" fill="#e4e2de"/>
<circle cx="82.7" cy="60.8" r="1.1" fill="#d2cfca"/>
<circle cx="38.0" cy="92.9" r="1.0" fill="#e8e6e2"/>
<circle cx="33.2" cy="40.3" r="1.5" fill="#e4e2de"/>
<circle cx="98.1" cy="108.8" r="1.5" fill="#cfccc6"/>
<circle cx="117.8" cy="38.5" r="1.2" fill="#e8e6e2"/>
<circle cx="90.3" cy="5.0" r="1.5" fill="#e8e6e2"/>
<circle cx="7.1" cy="31.5" r="1.0" fill="#e8e6e2"/>
<circle cx="84.4" cy="45.6" r="0.9" fill="#d2cfca"/>
<circle cx="113.9" cy="25.4" r="1.3" fill="#e4e2de"/>
<circle cx="55.9" cy="87.7" r="1.4" fill="#d2cfca"/>
<circle cx="16.7" cy="46.7" r="1.0" fill="#d2cfca"/>
<circle cx="24.6" cy="1.7" r="1.0" fill="#e4e2de"/>
<circle cx="36.1" cy="31.2" r="1.1" fill="#e8e6e2"/>
<circle cx="90.3" cy="17.2" r="1.4" fill="#e4e2de"/>
<circle cx="15.7" cy="5.3" r="1.1" fill="#d2cfca"/>
<circle cx="71.6" cy="99.4" r="1.1" fill="#e8e6e2"/>
<circle cx="3.5" cy="67.3" r="0.9" fill="#e8e6e2"/>
<circle cx="9.0" cy="54.4" r="1.0" fill="#d2cfca"/>
<circle cx="96.0" cy="50.6" r="1.6" fill="#e4e2de"/>
<circle cx="51.8" cy="86.1" r="1.4" fill="#d2cfca"/>
<circle cx="19.5" cy="21.7" r="1.2" fill="#cfccc6"/>
<circle cx="119.3" cy="109.2" r="0.9" fill="#e8e6e2"/>
<circle cx="43.0" cy="2.4" r="1.0" fill="#e4e2de"/>
<circle cx="53.2" cy="39.9" r="1.2" fill="#cfccc6"/>
<circle cx="48.7" cy="32.2" r="0.9" fill="#cfccc6"/>
<circle cx="0.9" cy="94.3" r="0.8" fill="#cfccc6"/>
<circle cx="44.7" cy="17.3" r="1.6" fill="#e4e2de"/>
<circle cx="54.3" cy="4.0" r="1.4" fill="#d2cfca"/>
<circle cx="52.7" cy="7.1" r="1.0" fill="#d2cfca"/>
<circle cx="124.9" cy="107.2" r="1.3" fill="#e8e6e2"/>
<circle cx="125.1" cy="5.8" r="1.6" fill="#cfccc6"/>
<circle cx="71.7" cy="83.7" r="1.1" fill="#d2cfca"/>
<circle cx="100.2" cy="38.4" r="0.8" fill="#e8e6e2"/>
<circle cx="27.9" cy="118.9" r="1.4" fill="#cfccc6"/>
<circle cx="35.2" cy="30.4" r="1.1" fill="#e8e6e2"/>
<circle cx="106.8" cy="102.6" r="1.5" fill="#cfccc6"/>
<circle cx="64.1" cy="104.2" r="1.0" fill="#e8e6e2"/>
<circle cx="121.0" cy="2.9" r="1.0" fill="#e4e2de"/>
<circle cx="51.7" cy="45.8" r="1.4" fill="#d2cfca"/>
<circle cx="48.5" cy="79.1" r="1.0" fill="#d2cfca"/>
<circle cx="8.9" cy="81.0" r="1.0" fill="#cfccc6"/>
<circle cx="28.4" cy="22.3" r="1.4" fill="#cfccc6"/>
<circle cx="72.6" cy="84.3" r="1.1" fill="#e4e2de"/>
<circle cx="20.7" cy="46.2" r="1.1" fill="#e4e2de"/>
<circle cx="1.3" cy="62.3" r="0.9" fill="#e8e6e2"/>
<path d="M0 102 Q50 94 112 102 L112 124 L0 124 Z" fill="#d8ccb2"/>
<ellipse cx="56" cy="101" rx="56" ry="6" fill="#e2d8c2"/>
<path d="M36 104 Q32 82 48 66 Q66 50 86 42 L110 44 Q112 66 100 80 L96 108 L84 110 L82 82 Q74 104 36 104 Z" fill="#ece6e0"/>
<ellipse cx="58" cy="88" rx="24" ry="18" fill="#e8e0da"/>
<ellipse cx="102" cy="33" rx="13" ry="15" fill="#e6ded8"/>
<ellipse cx="102" cy="37" rx="7" ry="8" fill="#8a7c78"/>
<path d="M89 28 L88 10 L99 21 Z M105 21 L116 10 L113 30 Z" fill="#6e5e56"/>
<circle cx="96.5" cy="31" r="1.7" fill="#4a80c8"/><circle cx="107" cy="31" r="1.7" fill="#4a80c8"/>
<path d="M36 104 Q28 112 32 124" stroke="#5a4a44" stroke-width="6.5" fill="none"/>
<path d="M60 106 Q75 110 90 108" stroke="#cfc4bc" stroke-width="4" fill="none"/>
</g></g>
</svg>

<!-- ===== popup ===== -->
<div class="a" style="left:440px;top:436.2px;width:242.6px;height:28px;background:#303135;border-radius:8px;box-shadow:0 2px 8px rgba(0,0,0,0.35)"></div>
<svg class="a" style="left:440px;top:436px" width="243" height="28" viewBox="440 436 243 28">
<circle cx="457.4" cy="450" r="7.2" fill="none" stroke="#6e6f75" stroke-width="1.3"/><path d="M453.5 445.5 L457.4 450.5 L461.3 445.5 M457.4 450.5 V455.5" stroke="#6e6f75" stroke-width="1.3" fill="none"/>
<rect x="473" y="443" width="1" height="14" fill="#46474d"/>
<rect x="553" y="443" width="1" height="14" fill="#46474d"/>
<rect x="585" y="443" width="1" height="14" fill="#46474d"/>
<rect x="617" y="443" width="1" height="14" fill="#46474d"/>
<rect x="648.5" y="443" width="1" height="14" fill="#46474d"/>
<path d="M482.3 456 L485.4 449 L488.6 456 M483.4 453.6 H487.4" stroke="#eeeef0" stroke-width="1.2" fill="none"/>
<path d="M488 444.5 H496 M491.3 443.3 V446.8 M491.3 446.8 Q488.3 447.5 488.8 450 Q489.5 452 492 450.5 Q493.5 448.5 495 448.5 Q496.2 449.5 495.6 452.6 M491.5 450.8 L493 453" stroke="#eeeef0" stroke-width="1.2" fill="none"/>
<circle cx="569.8" cy="450" r="6.6" fill="none" stroke="#e8e8ea" stroke-width="1.4"/><text x="569.8" y="453.7" text-anchor="middle" font-family="Liberation Sans" font-size="9.5" font-weight="bold" fill="#e8e8ea">Я</text>
<rect x="595.5" y="446.5" width="8" height="8" rx="2" fill="none" stroke="#e8e8ea" stroke-width="1.4"/><path d="M598.5 445 A2 2 0 0 1 600.5 443.3 H605 A2 2 0 0 1 607 445.3 V449.8 A2 2 0 0 1 605 451.8" stroke="#e8e8ea" stroke-width="1.4" fill="none"/>
<circle cx="632.9" cy="445.3" r="1.2" fill="#e8e8ea"/><circle cx="632.9" cy="450" r="1.2" fill="#e8e8ea"/><circle cx="632.9" cy="454.7" r="1.2" fill="#e8e8ea"/>
<path d="M661 445.3 L670 454.5 M670 445.3 L661 454.5" stroke="#e8e8ea" stroke-width="1.5"/>
</svg>
<div class="a" style="left:501.4px;top:442px;font-size:13px;line-height:16px;color:#eeeef0;white-space:nowrap">Аудару</div>
<div class="a" style="left:561.5px;top:466px;width:1.3px;height:21px;background:#202122"></div>
<div class="a" style="left:559.5px;top:466px;width:5px;height:1.2px;background:#202122"></div>
<div class="a" style="left:559.5px;top:486px;width:5px;height:1.2px;background:#202122"></div>

</body></html>
